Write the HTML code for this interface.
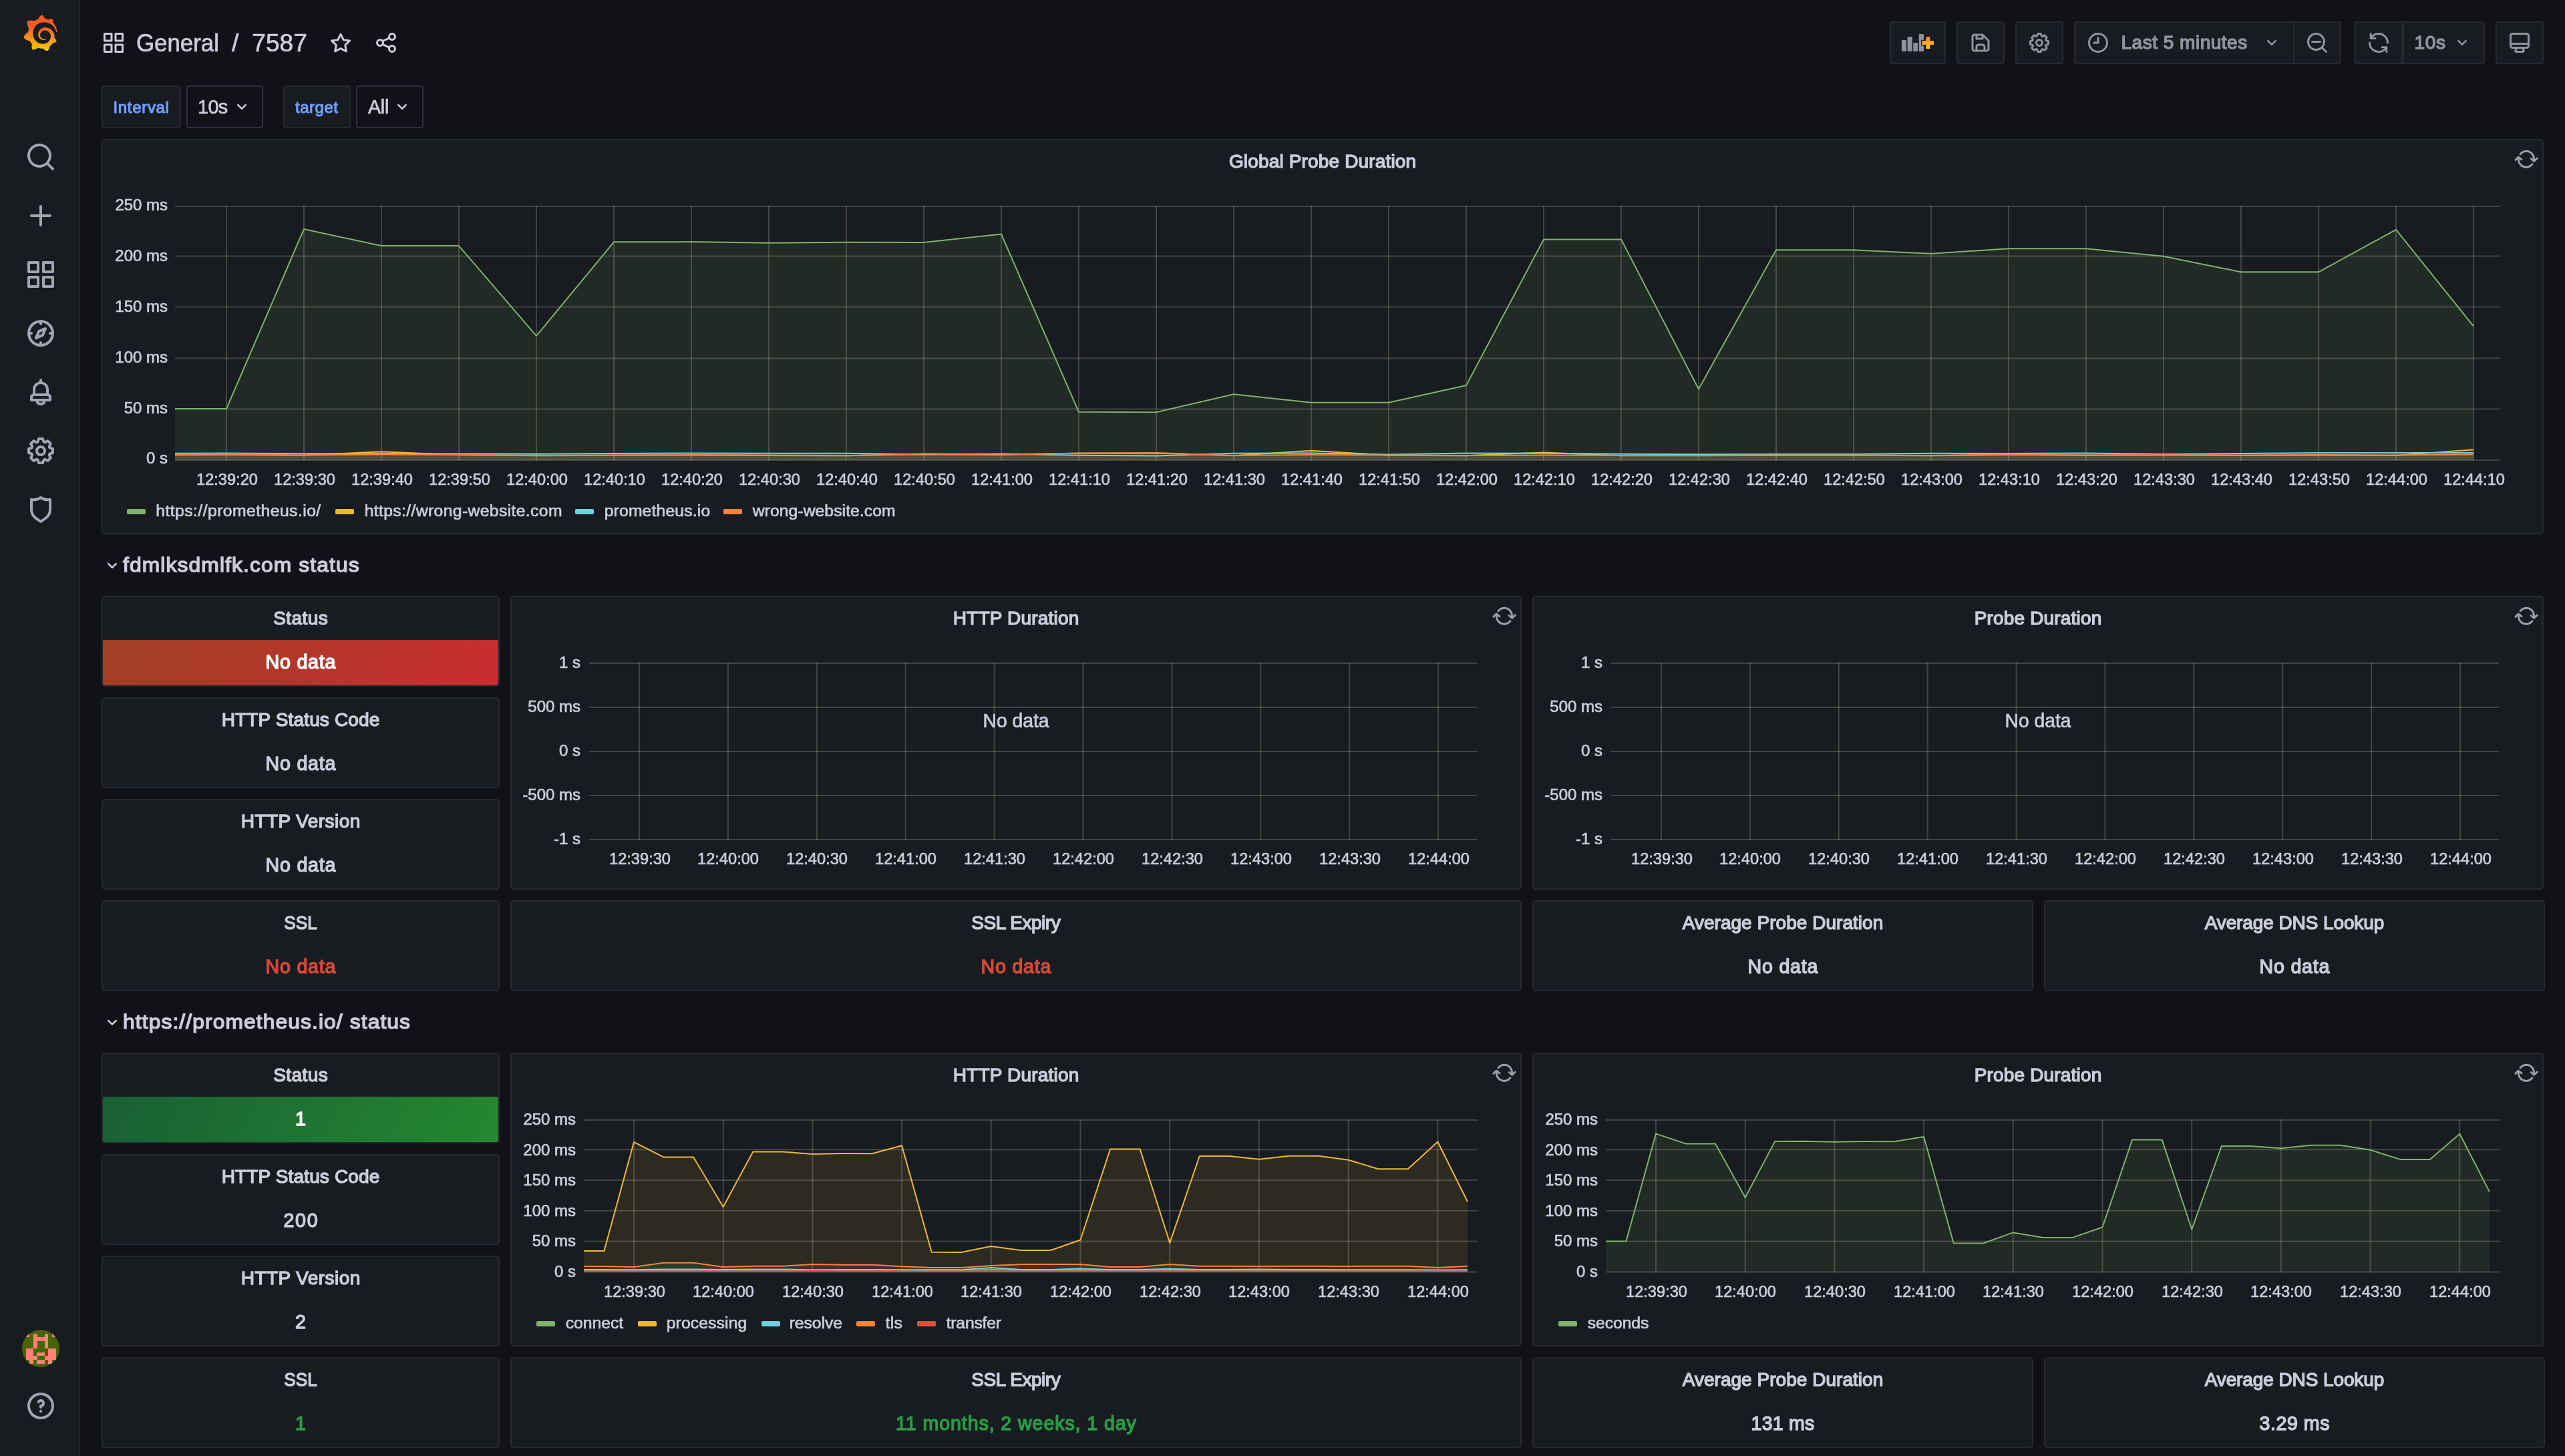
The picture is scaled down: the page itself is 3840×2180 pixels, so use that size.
<!DOCTYPE html>
<html lang="en"><head><meta charset="utf-8"><title>7587 - Grafana</title>
<style>
*{margin:0;padding:0;box-sizing:border-box}
html,body{width:3840px;height:2180px;overflow:hidden;background:#111217}
body{position:relative;font-family:"Liberation Sans",sans-serif;color:#ccccdc}
.t{position:absolute;white-space:nowrap}
.t span{display:inline-block;-webkit-text-stroke:0.7px currentColor}
.m span{-webkit-text-stroke:1.4px currentColor}
.m2 span{-webkit-text-stroke:1.1px currentColor}
.b{position:absolute}
.i{position:absolute;display:block}
svg.c{position:absolute;left:0;top:0;display:block}
#tx{position:absolute;left:0;top:0;width:3840px;height:2180px;will-change:transform}
</style></head>
<body>
<div class="b" style="left:0;top:0;width:120px;height:2180px;background:#181b1f;border-right:2px solid #27292f"></div>
<svg class="i" style="left:33.7px;top:21.6px" width="52.5" height="54.6" viewBox="0 0 351 365"><defs><linearGradient id="lg" gradientUnits="userSpaceOnUse" x1="175.5" y1="445" x2="175.5" y2="114"><stop offset="0" stop-color="#FFF100"/><stop offset="1" stop-color="#F05A28"/></linearGradient></defs><path fill="url(#lg)" d="M342,161.2c-0.6-6.1-1.6-13.1-3.6-20.9c-2-7.7-5-16.2-9.4-25c-4.4-8.8-10.1-17.9-17.5-26.8c-2.9-3.5-6.1-6.9-9.5-10.2c5.1-20.3-6.2-37.9-6.2-37.9c-19.5-1.2-31.9,6.1-36.5,9.4c-0.8-0.3-1.5-0.7-2.3-1c-3.3-1.3-6.7-2.6-10.3-3.7c-3.5-1.1-7.1-2.1-10.8-3c-3.7-0.9-7.4-1.6-11.2-2.2c-0.7-0.1-1.3-0.2-2-0.3c-8.5-27.2-32.9-38.6-32.9-38.6c-27.3,17.3-32.4,41.5-32.4,41.5s-0.1,0.5-0.3,1.4c-1.5,0.4-3,0.9-4.5,1.3c-2.1,0.6-4.2,1.4-6.2,2.2c-2.1,0.8-4.1,1.6-6.2,2.5c-4.1,1.8-8.2,3.8-12.2,6c-3.9,2.2-7.7,4.6-11.4,7.1c-0.5-0.2-1-0.4-1-0.4c-37.8-14.4-71.3,2.9-71.3,2.9c-3.1,40.2,15.1,65.5,18.7,70.1c-0.9,2.5-1.7,5-2.5,7.5c-2.8,9.1-4.9,18.4-6.2,28.1c-0.2,1.4-0.4,2.8-0.5,4.2C18.8,192.7,8.5,228,8.5,228c29.1,33.5,63.1,35.6,63.1,35.6c0,0,0.1-0.1,0.1-0.1c4.3,7.7,9.3,15,14.9,21.9c2.4,2.9,4.8,5.6,7.4,8.3c-10.6,30.4,1.5,55.6,1.5,55.6c32.4,1.2,53.7-14.2,58.2-17.7c3.2,1.1,6.5,2.1,9.8,2.9c10,2.6,20.2,4.1,30.4,4.5c2.5,0.1,5.1,0.2,7.6,0.1l1.2,0l0.8,0l1.6,0l1.6-0.1l0,0.1c15.3,21.8,42.1,24.9,42.1,24.9c19.1-20.1,20.2-40.1,20.2-44.4l0,0c0,0,0-0.1,0-0.3c0-0.4,0-0.6,0-0.6l0,0c0-0.3,0-0.6,0-0.9c4-2.8,7.8-5.8,11.4-9.1c7.6-6.9,14.3-14.8,19.9-23.3c0.5-0.8,1-1.6,1.5-2.4c21.6,1.2,36.9-13.4,36.9-13.4c-3.6-22.5-16.4-33.5-19.1-35.6l0,0c0,0-0.1-0.1-0.3-0.2c-0.2-0.1-0.2-0.2-0.2-0.2c0,0,0,0,0,0c-0.1-0.1-0.3-0.2-0.5-0.3c0.1-1.4,0.2-2.7,0.3-4.1c0.2-2.4,0.2-4.9,0.2-7.3l0-1.8l0-0.9l0-0.5c0-0.6,0-0.4,0-0.6l-0.1-1.5l-0.1-2c0-0.7-0.1-1.3-0.2-1.9c-0.1-0.6-0.1-1.3-0.2-1.9l-0.2-1.9l-0.3-1.9c-0.4-2.5-0.8-4.9-1.4-7.4c-2.3-9.7-6.1-18.9-11-27.2c-5-8.3-11.2-15.6-18.3-21.8c-7-6.2-14.9-11.2-23.1-14.9c-8.3-3.7-16.9-6.1-25.5-7.2c-4.3-0.6-8.6-0.8-12.9-0.7l-1.6,0l-0.4,0c-0.1,0-0.6,0-0.5,0l-0.7,0l-1.6,0.1c-0.6,0-1.2,0.1-1.7,0.1c-2.2,0.2-4.4,0.5-6.5,0.9c-8.6,1.6-16.7,4.7-23.8,9c-7.1,4.3-13.3,9.6-18.3,15.6c-5,6-8.9,12.7-11.6,19.6c-2.7,6.9-4.2,14.1-4.6,21c-0.1,1.7-0.1,3.5-0.1,5.2c0,0.4,0,0.9,0,1.3l0.1,1.4c0.1,0.8,0.1,1.7,0.2,2.5c0.3,3.5,1,6.9,1.9,10.1c1.9,6.5,4.9,12.4,8.6,17.4c3.7,5,8.2,9.1,12.9,12.4c4.7,3.2,9.8,5.5,14.8,7c5,1.5,10,2.1,14.7,2.1c0.6,0,1.2,0,1.7,0c0.3,0,0.6,0,0.9,0c0.3,0,0.6,0,0.9-0.1c0.5,0,1-0.1,1.5-0.1c0.1,0,0.3,0,0.4-0.1l0.5-0.1c0.3,0,0.6-0.1,0.9-0.1c0.6-0.1,1.1-0.2,1.7-0.3c0.6-0.1,1.1-0.2,1.6-0.4c1.1-0.2,2.1-0.6,3.1-0.9c2-0.7,4-1.5,5.7-2.4c1.8-0.9,3.4-2,5-3c0.4-0.3,0.9-0.6,1.3-1c1.6-1.3,1.9-3.7,0.6-5.3c-1.1-1.4-3.1-1.8-4.7-0.9c-0.4,0.2-0.8,0.4-1.2,0.6c-1.4,0.7-2.8,1.3-4.3,1.8c-1.5,0.5-3.1,0.9-4.7,1.2c-0.8,0.1-1.6,0.2-2.5,0.3c-0.4,0-0.8,0.1-1.3,0.1c-0.4,0-0.9,0-1.2,0c-0.4,0-0.8,0-1.2,0c-0.5,0-1,0-1.5-0.1c0,0-0.3,0-0.1,0l-0.2,0l-0.3,0c-0.2,0-0.5,0-0.7-0.1c-0.5-0.1-0.9-0.1-1.4-0.2c-3.7-0.5-7.4-1.6-10.9-3.2c-3.6-1.6-7-3.8-10.1-6.6c-3.1-2.8-5.8-6.1-7.9-9.9c-2.1-3.8-3.6-8-4.3-12.4c-0.3-2.2-0.5-4.5-0.4-6.7c0-0.6,0.1-1.2,0.1-1.8c0,0.2,0-0.1,0-0.1l0-0.2l0-0.5c0-0.3,0.1-0.6,0.1-0.9c0.1-1.2,0.3-2.4,0.5-3.6c1.7-9.6,6.5-19,13.9-26.1c1.9-1.8,3.9-3.4,6-4.9c2.1-1.5,4.4-2.8,6.8-3.9c2.4-1.1,4.8-2,7.4-2.7c2.5-0.7,5.1-1.1,7.8-1.4c1.3-0.1,2.6-0.2,4-0.2c0.4,0,0.6,0,0.9,0l1.1,0l0.7,0c0.3,0,0,0,0.1,0l0.3,0l1.1,0.1c2.9,0.2,5.7,0.6,8.5,1.3c5.6,1.2,11.1,3.3,16.2,6.1c10.2,5.7,18.9,14.5,24.2,25.1c2.7,5.3,4.6,11,5.5,16.9c0.2,1.5,0.4,3,0.5,4.5l0.1,1.1l0.1,1.1c0,0.4,0,0.8,0,1.1c0,0.4,0,0.8,0,1.1l0,1l0,1.1c0,0.7-0.1,1.9-0.1,2.6c-0.1,1.6-0.3,3.3-0.5,4.9c-0.2,1.6-0.5,3.2-0.8,4.8c-0.3,1.6-0.7,3.2-1.1,4.7c-0.8,3.1-1.8,6.2-3,9.3c-2.4,6-5.6,11.8-9.4,17.1c-7.7,10.6-18.2,19.2-30.2,24.7c-6,2.7-12.3,4.7-18.8,5.7c-3.2,0.6-6.5,0.9-9.8,1l-0.6,0l-0.5,0l-1.1,0l-1.6,0l-0.8,0c0.4,0-0.1,0-0.1,0l-0.3,0c-1.8,0-3.5-0.1-5.3-0.3c-7-0.5-13.9-1.8-20.7-3.7c-6.7-1.9-13.2-4.6-19.4-7.8c-12.3-6.6-23.4-15.6-32-26.5c-4.3-5.4-8.1-11.3-11.2-17.4c-3.1-6.1-5.6-12.6-7.4-19.1c-1.8-6.6-2.9-13.3-3.4-20.1l-0.1-1.3l0-0.3l0-0.3l0-0.6l0-1.1l0-0.3l0-0.4l0-0.8l0-1.6l0-0.3c0,0,0,0.1,0-0.1l0-0.6c0-0.8,0-1.7,0-2.5c0.1-3.3,0.4-6.8,0.8-10.2c0.4-3.4,1-6.9,1.7-10.3c0.7-3.4,1.5-6.8,2.5-10.2c1.9-6.7,4.3-13.2,7.1-19.3c5.7-12.2,13.1-23.1,22-31.8c2.2-2.2,4.5-4.2,6.9-6.2c2.4-1.9,4.9-3.7,7.5-5.4c2.5-1.7,5.2-3.2,7.9-4.6c1.3-0.7,2.7-1.4,4.1-2c0.7-0.3,1.4-0.6,2.1-0.9c0.7-0.3,1.4-0.6,2.1-0.9c2.8-1.2,5.7-2.2,8.7-3.1c0.7-0.2,1.5-0.4,2.2-0.7c0.7-0.2,1.5-0.4,2.2-0.6c1.5-0.4,3-0.8,4.5-1.1c0.7-0.2,1.5-0.3,2.3-0.5c0.8-0.2,1.5-0.3,2.3-0.5c0.8-0.1,1.5-0.3,2.3-0.4l1.1-0.2l1.2-0.2c0.8-0.1,1.5-0.2,2.3-0.3c0.9-0.1,1.7-0.2,2.6-0.3c0.7-0.1,1.9-0.2,2.6-0.3c0.5-0.1,1.1-0.1,1.6-0.2l1.1-0.1l0.5-0.1l0.6,0c0.9-0.1,1.7-0.1,2.6-0.2l1.3-0.1c0,0,0.5,0,0.1,0l0.3,0l0.6,0c0.7,0,1.5-0.1,2.2-0.1c2.9-0.1,5.9-0.1,8.8,0c5.8,0.2,11.5,0.9,17,1.9c11.1,2.1,21.5,5.6,31,10.3c9.5,4.6,17.9,10.3,25.3,16.5c0.5,0.4,0.9,0.8,1.4,1.2c0.4,0.4,0.9,0.8,1.3,1.2c0.9,0.8,1.7,1.6,2.6,2.4c0.9,0.8,1.7,1.6,2.5,2.4c0.8,0.8,1.6,1.6,2.4,2.5c3.1,3.3,6,6.6,8.6,10c5.2,6.7,9.4,13.5,12.7,19.9c0.2,0.4,0.4,0.8,0.6,1.2c0.2,0.4,0.4,0.8,0.6,1.2c0.4,0.8,0.8,1.6,1.1,2.4c0.4,0.8,0.7,1.5,1.1,2.3c0.3,0.8,0.7,1.5,1,2.3c1.2,3,2.4,5.9,3.3,8.6c1.5,4.4,2.6,8.3,3.5,11.7c0.3,1.4,1.6,2.3,3,2.1c1.5-0.1,2.6-1.3,2.6-2.8C342.6,170.4,342.5,166.1,342,161.2z"/></svg>
<svg class="i" style="left:37px;top:211px" width="48" height="48" viewBox="0 0 24 24"><path fill="#9fa7b3" d="M21.71,20.29,18,16.61A9,9,0,1,0,16.61,18l3.68,3.68a1,1,0,0,0,1.42,0A1,1,0,0,0,21.71,20.29ZM11,18a7,7,0,1,1,7-7A7,7,0,0,1,11,18Z"/></svg>
<svg class="i" style="left:37px;top:299px" width="48" height="48" viewBox="0 0 24 24"><path fill="#9fa7b3" d="M19,11H13V5a1,1,0,0,0-2,0v6H5a1,1,0,0,0,0,2h6v6a1,1,0,0,0,2,0V13h6a1,1,0,0,0,0-2Z"/></svg>
<svg class="i" style="left:37px;top:387px" width="48" height="48" viewBox="0 0 24 24"><path fill="#9fa7b3" d="M10,13H3a1,1,0,0,0-1,1v7a1,1,0,0,0,1,1h7a1,1,0,0,0,1-1V14A1,1,0,0,0,10,13ZM9,20H4V15H9ZM21,2H14a1,1,0,0,0-1,1v7a1,1,0,0,0,1,1h7a1,1,0,0,0,1-1V3A1,1,0,0,0,21,2ZM20,9H15V4h5Zm1,4H14a1,1,0,0,0-1,1v7a1,1,0,0,0,1,1h7a1,1,0,0,0,1-1V14A1,1,0,0,0,21,13Zm-1,7H15V15h5ZM10,2H3A1,1,0,0,0,2,3v7a1,1,0,0,0,1,1h7a1,1,0,0,0,1-1V3A1,1,0,0,0,10,2ZM9,9H4V4H9Z"/></svg>
<svg class="i" style="left:37px;top:475px" width="48" height="48" viewBox="0 0 24 24"><path fill="#9fa7b3" d="M12,2A10,10,0,1,0,22,12,10,10,0,0,0,12,2Zm1,17.93V19a1,1,0,0,0-2,0v.93A8,8,0,0,1,4.07,13H5a1,1,0,0,0,0-2H4.07A8,8,0,0,1,11,4.07V5a1,1,0,0,0,2,0V4.07A8,8,0,0,1,19.93,11H19a1,1,0,0,0,0,2h.93A8,8,0,0,1,13,19.93ZM15.14,7.55l-5,2.12a1,1,0,0,0-.52.52l-2.12,5a1,1,0,0,0,.21,1.1,1,1,0,0,0,.7.3.93.93,0,0,0,.4-.09l5-2.12a1,1,0,0,0,.52-.52l2.12-5a1,1,0,0,0-1.31-1.31Zm-2.49,5.1-2.28,1,1-2.28,2.28-1Z"/></svg>
<svg class="i" style="left:37px;top:563px" width="48" height="48" viewBox="0 0 24 24"><path fill="#9fa7b3" d="M18,13.18V10a6,6,0,0,0-5-5.91V3a1,1,0,0,0-2,0V4.09A6,6,0,0,0,6,10v3.18A3,3,0,0,0,4,16v2a1,1,0,0,0,1,1H8.14a4,4,0,0,0,7.72,0H19a1,1,0,0,0,1-1V16A3,3,0,0,0,18,13.18ZM8,10a4,4,0,0,1,8,0v3H8Zm4,10a2,2,0,0,1-1.72-1h3.44A2,2,0,0,1,12,20Zm6-3H6V16a1,1,0,0,1,1-1H17a1,1,0,0,1,1,1Z"/></svg>
<svg class="i" style="left:37px;top:651px" width="48" height="48" viewBox="0 0 24 24"><path fill="#9fa7b3" d="M21.32,9.55l-1.89-.63.89-1.78A1,1,0,0,0,20.13,6L18,3.87a1,1,0,0,0-1.15-.19l-1.78.89-.63-1.89A1,1,0,0,0,13.5,2h-3a1,1,0,0,0-.95.68L8.92,4.57,7.14,3.68A1,1,0,0,0,6,3.87L3.87,6a1,1,0,0,0-.19,1.15l.89,1.78-1.89.63A1,1,0,0,0,2,10.5v3a1,1,0,0,0,.68.95l1.89.63-.89,1.78A1,1,0,0,0,3.87,18L6,20.13a1,1,0,0,0,1.15.19l1.78-.89.63,1.89a1,1,0,0,0,.95.68h3a1,1,0,0,0,.95-.68l.63-1.89,1.78.89A1,1,0,0,0,18,20.13L20.13,18a1,1,0,0,0,.19-1.15l-.89-1.78,1.89-.63A1,1,0,0,0,22,13.5v-3A1,1,0,0,0,21.32,9.55ZM20,12.78l-1.2.4A2,2,0,0,0,17.64,16l.57,1.14-1.1,1.1L16,17.64a2,2,0,0,0-2.79,1.16l-.4,1.2H11.22l-.4-1.2A2,2,0,0,0,8,17.64l-1.14.57-1.1-1.1L6.36,16A2,2,0,0,0,5.2,13.18L4,12.78V11.22l1.2-.4A2,2,0,0,0,6.36,8L5.79,6.89l1.1-1.1L8,6.36A2,2,0,0,0,10.82,5.2l.4-1.2h1.56l.4,1.2A2,2,0,0,0,16,6.36l1.14-.57,1.1,1.1L17.64,8a2,2,0,0,0,1.16,2.79l1.2.4ZM12,8a4,4,0,1,0,4,4A4,4,0,0,0,12,8Zm0,6a2,2,0,1,1,2-2A2,2,0,0,1,12,14Z"/></svg>
<svg class="i" style="left:37px;top:739px" width="48" height="48" viewBox="0 0 24 24"><path fill="#9fa7b3" d="M19.63,3.65a1,1,0,0,0-.84-.2,8,8,0,0,1-6.22-1.27,1,1,0,0,0-1.14,0A8,8,0,0,1,5.21,3.45a1,1,0,0,0-.84.2A1,1,0,0,0,4,4.43v7.45a9,9,0,0,0,3.77,7.33l3.65,2.6a1,1,0,0,0,1.16,0l3.65-2.6A9,9,0,0,0,20,11.88V4.43A1,1,0,0,0,19.63,3.65ZM18,11.88a7,7,0,0,1-2.93,5.7L12,19.77,8.93,17.58A7,7,0,0,1,6,11.88V5.58a10,10,0,0,0,6-1.39,10,10,0,0,0,6,1.39Z"/></svg>
<svg class="i" style="left:37px;top:2081px" width="48" height="48" viewBox="0 0 24 24"><path fill="#9fa7b3" d="M11.29,15.29a1.58,1.58,0,0,0-.12.15.76.76,0,0,0-.09.18.64.64,0,0,0-.06.18,1.36,1.36,0,0,0,0,.2.84.84,0,0,0,.08.38.9.9,0,0,0,.54.54.94.94,0,0,0,.76,0,.9.9,0,0,0,.54-.54A1,1,0,0,0,13,16a1,1,0,0,0-.29-.71A1,1,0,0,0,11.29,15.29ZM12,2A10,10,0,1,0,22,12,10,10,0,0,0,12,2Zm0,18a8,8,0,1,1,8-8A8,8,0,0,1,12,20ZM12,7A3,3,0,0,0,9.4,8.5a1,1,0,1,0,1.73,1A1,1,0,0,1,12,9a1,1,0,0,1,0,2,1,1,0,0,0-1,1v1a1,1,0,0,0,2,0v-.18A3,3,0,0,0,12,7Z"/></svg>
<svg class="i" style="left:33px;top:1991px" width="56" height="56" viewBox="0 0 10 10" shape-rendering="crispEdges"><defs><clipPath id="av"><circle cx="5" cy="5" r="5"/></clipPath></defs><g clip-path="url(#av)"><rect width="10" height="10" fill="#486409"/><rect x="1" y="1" width="1.02" height="1.02" fill="#fe8076"/><rect x="3" y="1" width="1.02" height="1.02" fill="#fe8076"/><rect x="6" y="1" width="1.02" height="1.02" fill="#fe8076"/><rect x="8" y="1" width="1.02" height="1.02" fill="#fe8076"/><rect x="3" y="2" width="1.02" height="1.02" fill="#fe8076"/><rect x="4" y="2" width="1.02" height="1.02" fill="#fe8076"/><rect x="5" y="2" width="1.02" height="1.02" fill="#fe8076"/><rect x="6" y="2" width="1.02" height="1.02" fill="#fe8076"/><rect x="3" y="3" width="1.02" height="1.02" fill="#fe8076"/><rect x="6" y="3" width="1.02" height="1.02" fill="#fe8076"/><rect x="3" y="4" width="1.02" height="1.02" fill="#fe8076"/><rect x="6" y="4" width="1.02" height="1.02" fill="#fe8076"/><rect x="1" y="5" width="1.02" height="1.02" fill="#fe8076"/><rect x="2" y="5" width="1.02" height="1.02" fill="#fe8076"/><rect x="7" y="5" width="1.02" height="1.02" fill="#fe8076"/><rect x="8" y="5" width="1.02" height="1.02" fill="#fe8076"/><rect x="1" y="6" width="1.02" height="1.02" fill="#fe8076"/><rect x="2" y="6" width="1.02" height="1.02" fill="#fe8076"/><rect x="4" y="6" width="1.02" height="1.02" fill="#fe8076"/><rect x="5" y="6" width="1.02" height="1.02" fill="#fe8076"/><rect x="7" y="6" width="1.02" height="1.02" fill="#fe8076"/><rect x="8" y="6" width="1.02" height="1.02" fill="#fe8076"/><rect x="1" y="7" width="1.02" height="1.02" fill="#fe8076"/><rect x="2" y="7" width="1.02" height="1.02" fill="#fe8076"/><rect x="3" y="7" width="1.02" height="1.02" fill="#fe8076"/><rect x="6" y="7" width="1.02" height="1.02" fill="#fe8076"/><rect x="7" y="7" width="1.02" height="1.02" fill="#fe8076"/><rect x="8" y="7" width="1.02" height="1.02" fill="#fe8076"/><rect x="2" y="8" width="1.02" height="1.02" fill="#fe8076"/><rect x="4" y="8" width="1.02" height="1.02" fill="#fe8076"/><rect x="5" y="8" width="1.02" height="1.02" fill="#fe8076"/><rect x="7" y="8" width="1.02" height="1.02" fill="#fe8076"/></g></svg>
<svg class="i" style="left:152px;top:46px" width="36" height="36" viewBox="0 0 24 24"><path fill="#ccccdc" d="M10,13H3a1,1,0,0,0-1,1v7a1,1,0,0,0,1,1h7a1,1,0,0,0,1-1V14A1,1,0,0,0,10,13ZM9,20H4V15H9ZM21,2H14a1,1,0,0,0-1,1v7a1,1,0,0,0,1,1h7a1,1,0,0,0,1-1V3A1,1,0,0,0,21,2ZM20,9H15V4h5Zm1,4H14a1,1,0,0,0-1,1v7a1,1,0,0,0,1,1h7a1,1,0,0,0,1-1V14A1,1,0,0,0,21,13Zm-1,7H15V15h5ZM10,2H3A1,1,0,0,0,2,3v7a1,1,0,0,0,1,1h7a1,1,0,0,0,1-1V3A1,1,0,0,0,10,2ZM9,9H4V4H9Z"/></svg>
<svg class="i" style="left:492px;top:46px" width="36" height="36" viewBox="0 0 24 24"><path fill="#ccccdc" d="M22,9.67A1,1,0,0,0,21.14,9l-5.69-.83L12.9,3a1,1,0,0,0-1.8,0L8.55,8.16,2.86,9a1,1,0,0,0-.81.68,1,1,0,0,0,.25,1l4.13,4-1,5.68A1,1,0,0,0,6.9,21.44L12,18.77l5.1,2.67a.93.93,0,0,0,.46.12,1,1,0,0,0,.59-.19,1,1,0,0,0,.4-1l-1-5.68,4.13-4A1,1,0,0,0,22,9.67Zm-6.15,4a1,1,0,0,0-.29.88l.72,4.2-3.76-2a1.06,1.06,0,0,0-.94,0l-3.76,2,.72-4.2a1,1,0,0,0-.29-.88l-3-3,4.21-.61a1,1,0,0,0,.76-.55L12,5.7l1.88,3.82a1,1,0,0,0,.76.55l4.21.61Z"/></svg>
<svg class="i" style="left:560px;top:46px" width="36" height="36" viewBox="0 0 24 24"><path fill="#ccccdc" d="M18,14a4,4,0,0,0-3.08,1.48l-5.1-2.35a3.64,3.64,0,0,0,0-2.26l5.1-2.35A4,4,0,1,0,14,6a4.17,4.17,0,0,0,.07.71L8.79,9.14a4,4,0,1,0,0,5.72l5.28,2.43A4.17,4.17,0,0,0,14,18a4,4,0,1,0,4-4ZM18,4a2,2,0,1,1-2,2A2,2,0,0,1,18,4ZM6,14a2,2,0,1,1,2-2A2,2,0,0,1,6,14Zm12,6a2,2,0,1,1,2-2A2,2,0,0,1,18,20Z"/></svg>
<div class="b" style="left:2829px;top:32px;width:84px;height:64px;background:#181b1f;border:2px solid #27292f;border-radius:4px;"></div>
<div class="b" style="left:2929px;top:32px;width:72px;height:64px;background:#181b1f;border:2px solid #27292f;border-radius:4px;"></div>
<div class="b" style="left:3017px;top:32px;width:72px;height:64px;background:#181b1f;border:2px solid #27292f;border-radius:4px;"></div>
<div class="b" style="left:3105px;top:32px;width:400px;height:64px;background:#181b1f;border:2px solid #27292f;border-radius:4px;"></div>
<div class="b" style="left:3433px;top:34px;width:2px;height:60px;background:#27292f"></div>
<div class="b" style="left:3525px;top:32px;width:72px;height:64px;background:#181b1f;border:2px solid #27292f;border-radius:4px;border-top-right-radius:0;border-bottom-right-radius:0;"></div>
<div class="b" style="left:3597px;top:32px;width:123px;height:64px;background:#181b1f;border:2px solid #27292f;border-radius:4px;"></div>
<div class="b" style="left:3736px;top:32px;width:72px;height:64px;background:#181b1f;border:2px solid #27292f;border-radius:4px;"></div>
<svg class="i" style="left:2840px;top:44px" width="64" height="40" viewBox="0 0 64 40"><defs><linearGradient id="pg" x1="0" y1="0" x2="0" y2="1"><stop offset="0" stop-color="#f5823c"/><stop offset="1" stop-color="#ffc814"/></linearGradient></defs><rect x="6.9" y="16.1" width="7.1" height="17" rx="1" fill="#8f8f9d"/><rect x="15.6" y="10.9" width="7.2" height="22.2" rx="1" fill="#8f8f9d"/><rect x="24.2" y="19.9" width="6.9" height="13.2" rx="1" fill="#8f8f9d"/><rect x="32.8" y="7" width="7.2" height="26.1" rx="1" fill="#8f8f9d"/><path d="M43.4 11.1h6v5.9h5.7v6.1h-5.7v5.9h-6v-5.9h-6v-6.1h6z" fill="url(#pg)" stroke="#181b1f" stroke-width="2.6" stroke-linejoin="round" paint-order="stroke"/></svg>
<svg class="i" style="left:2947px;top:46px" width="36" height="36" viewBox="0 0 24 24"><path fill="#9293a0" d="M20.71,9.29l-6-6a1,1,0,0,0-.32-.21A1.09,1.09,0,0,0,14,3H6A3,3,0,0,0,3,6V18a3,3,0,0,0,3,3H18a3,3,0,0,0,3-3V10A1,1,0,0,0,20.71,9.29ZM9,5h4V7H9Zm6,14H9V16a1,1,0,0,1,1-1h4a1,1,0,0,1,1,1Zm4-1a1,1,0,0,1-1,1H17V16a3,3,0,0,0-3-3H10a3,3,0,0,0-3,3v3H6a1,1,0,0,1-1-1V6A1,1,0,0,1,6,5H7V8A1,1,0,0,0,8,9h6a1,1,0,0,0,1-1V6.41l4,4Z"/></svg>
<svg class="i" style="left:3035px;top:46px" width="36" height="36" viewBox="0 0 24 24"><path fill="#9293a0" d="M21.32,9.55l-1.89-.63.89-1.78A1,1,0,0,0,20.13,6L18,3.87a1,1,0,0,0-1.15-.19l-1.78.89-.63-1.89A1,1,0,0,0,13.5,2h-3a1,1,0,0,0-.95.68L8.92,4.57,7.14,3.68A1,1,0,0,0,6,3.87L3.87,6a1,1,0,0,0-.19,1.15l.89,1.78-1.89.63A1,1,0,0,0,2,10.5v3a1,1,0,0,0,.68.95l1.89.63-.89,1.78A1,1,0,0,0,3.87,18L6,20.13a1,1,0,0,0,1.15.19l1.78-.89.63,1.89a1,1,0,0,0,.95.68h3a1,1,0,0,0,.95-.68l.63-1.89,1.78.89A1,1,0,0,0,18,20.13L20.13,18a1,1,0,0,0,.19-1.15l-.89-1.78,1.89-.63A1,1,0,0,0,22,13.5v-3A1,1,0,0,0,21.32,9.55ZM20,12.78l-1.2.4A2,2,0,0,0,17.64,16l.57,1.14-1.1,1.1L16,17.64a2,2,0,0,0-2.79,1.16l-.4,1.2H11.22l-.4-1.2A2,2,0,0,0,8,17.64l-1.14.57-1.1-1.1L6.36,16A2,2,0,0,0,5.2,13.18L4,12.78V11.22l1.2-.4A2,2,0,0,0,6.36,8L5.79,6.89l1.1-1.1L8,6.36A2,2,0,0,0,10.82,5.2l.4-1.2h1.56l.4,1.2A2,2,0,0,0,16,6.36l1.14-.57,1.1,1.1L17.64,8a2,2,0,0,0,1.16,2.79l1.2.4ZM12,8a4,4,0,1,0,4,4A4,4,0,0,0,12,8Zm0,6a2,2,0,1,1,2-2A2,2,0,0,1,12,14Z"/></svg>
<svg class="i" style="left:3123px;top:46px" width="36" height="36" viewBox="0 0 24 24"><path fill="#9293a0" d="M12,2A10,10,0,1,0,22,12,10,10,0,0,0,12,2Zm0,18a8,8,0,1,1,8-8A8,8,0,0,1,12,20ZM12,6a1,1,0,0,0-1,1v4H8a1,1,0,0,0,0,2h4a1,1,0,0,0,1-1V7A1,1,0,0,0,12,6Z"/></svg>
<svg class="i" style="left:3385px;top:48px" width="32" height="32" viewBox="0 0 24 24"><path fill="#9293a0" d="M17,9.17a1,1,0,0,0-1.41,0L12,12.71,8.46,9.17a1,1,0,0,0-1.41,0,1,1,0,0,0,0,1.42l4.24,4.24a1,1,0,0,0,1.42,0L17,10.59A1,1,0,0,0,17,9.17Z"/></svg>
<svg class="i" style="left:3451px;top:46px" width="36" height="36" viewBox="0 0 24 24"><path fill="#9293a0" d="M21.71,20.29,18,16.61A9,9,0,1,0,16.61,18l3.68,3.68a1,1,0,0,0,1.42,0A1,1,0,0,0,21.71,20.29ZM11,18a7,7,0,1,1,7-7A7,7,0,0,1,11,18Zm4-8H7a1,1,0,0,0,0,2h8a1,1,0,0,0,0-2Z"/></svg>
<svg class="i" style="left:3543px;top:46px" width="36" height="36" viewBox="0 0 24 24"><path fill="#9293a0" d="M19.91,15.51H15.38a1,1,0,0,0,0,2h2.4A8,8,0,0,1,4,12a1,1,0,0,0-2,0,10,10,0,0,0,16.88,7.23V21a1,1,0,0,0,2,0V16.5A1,1,0,0,0,19.91,15.51ZM12,2A10,10,0,0,0,5.12,4.77V3a1,1,0,0,0-2,0V7.5a1,1,0,0,0,1,1h4.5a1,1,0,0,0,0-2H6.22A8,8,0,0,1,20,12a1,1,0,0,0,2,0A10,10,0,0,0,12,2Z"/></svg>
<svg class="i" style="left:3670px;top:48px" width="32" height="32" viewBox="0 0 24 24"><path fill="#9293a0" d="M17,9.17a1,1,0,0,0-1.41,0L12,12.71,8.46,9.17a1,1,0,0,0-1.41,0,1,1,0,0,0,0,1.42l4.24,4.24a1,1,0,0,0,1.42,0L17,10.59A1,1,0,0,0,17,9.17Z"/></svg>
<svg class="i" style="left:3754px;top:46px" width="36" height="36" viewBox="0 0 24 24"><path fill="#9293a0" d="M19,2H5A3,3,0,0,0,2,5V15a3,3,0,0,0,3,3H7.64l-.58,1a2,2,0,0,0,0,2,2,2,0,0,0,1.75,1h6.46A2,2,0,0,0,17,21a2,2,0,0,0,0-2l-.59-1H19a3,3,0,0,0,3-3V5A3,3,0,0,0,19,2ZM8.77,20,10,18H14l1.2,2ZM20,15a1,1,0,0,1-1,1H5a1,1,0,0,1-1-1V14H20Zm0-3H4V5A1,1,0,0,1,5,4H19a1,1,0,0,1,1,1Z"/></svg>
<div class="b" style="left:152px;top:128px;width:119px;height:64px;background:#181b1f;border:2px solid #27292f;border-radius:4px;"></div>
<div class="b" style="left:279px;top:128px;width:115px;height:64px;background:#111217;border:2px solid #2e3037;border-radius:4px;"></div>
<svg class="i" style="left:346px;top:144px" width="32" height="32" viewBox="0 0 24 24"><path fill="#ccccdc" d="M17,9.17a1,1,0,0,0-1.41,0L12,12.71,8.46,9.17a1,1,0,0,0-1.41,0,1,1,0,0,0,0,1.42l4.24,4.24a1,1,0,0,0,1.42,0L17,10.59A1,1,0,0,0,17,9.17Z"/></svg>
<div class="b" style="left:424px;top:128px;width:101px;height:64px;background:#181b1f;border:2px solid #27292f;border-radius:4px;"></div>
<div class="b" style="left:533px;top:128px;width:101px;height:64px;background:#111217;border:2px solid #2e3037;border-radius:4px;"></div>
<svg class="i" style="left:586px;top:144px" width="32" height="32" viewBox="0 0 24 24"><path fill="#ccccdc" d="M17,9.17a1,1,0,0,0-1.41,0L12,12.71,8.46,9.17a1,1,0,0,0-1.41,0,1,1,0,0,0,0,1.42l4.24,4.24a1,1,0,0,0,1.42,0L17,10.59A1,1,0,0,0,17,9.17Z"/></svg>
<div class="b" style="left:152px;top:208px;width:3656px;height:592px;background:#181b1f;border:2px solid #27292f;border-radius:5px;"></div>
<svg class="i" style="left:3760px;top:216px" width="44" height="44" viewBox="-22 -22 44 44" fill="none" stroke="#9d9eab" stroke-width="3" stroke-linecap="round" stroke-linejoin="round"><path d="M-9,-7.2A11.5,11.5,0,0,1,11.5,1.2"/><path d="M9,7.9A11.5,11.5,0,0,1,-11.5,-0.8"/><path d="M7.2,-0.5L11.6,3.4L16.3,-0.8"/><path d="M-16.1,1.3L-11.8,-2.8L-6.9,0.9"/></svg>
<svg class="c" width="3840" height="2180" viewBox="0 0 3840 2180"><defs><clipPath id="cp39"><rect x="262" y="307" width="3480" height="383"/></clipPath></defs><rect x="338.0" y="308" width="2" height="382" fill="rgba(255,243,220,0.19)"/><rect x="454.0" y="308" width="2" height="382" fill="rgba(255,243,220,0.19)"/><rect x="570.0" y="308" width="2" height="382" fill="rgba(255,243,220,0.19)"/><rect x="686.0" y="308" width="2" height="382" fill="rgba(255,243,220,0.19)"/><rect x="802.0" y="308" width="2" height="382" fill="rgba(255,243,220,0.19)"/><rect x="918.0" y="308" width="2" height="382" fill="rgba(255,243,220,0.19)"/><rect x="1034.0" y="308" width="2" height="382" fill="rgba(255,243,220,0.19)"/><rect x="1150.0" y="308" width="2" height="382" fill="rgba(255,243,220,0.19)"/><rect x="1266.0" y="308" width="2" height="382" fill="rgba(255,243,220,0.19)"/><rect x="1382.0" y="308" width="2" height="382" fill="rgba(255,243,220,0.19)"/><rect x="1498.0" y="308" width="2" height="382" fill="rgba(255,243,220,0.19)"/><rect x="1614.0" y="308" width="2" height="382" fill="rgba(255,243,220,0.19)"/><rect x="1730.0" y="308" width="2" height="382" fill="rgba(255,243,220,0.19)"/><rect x="1846.0" y="308" width="2" height="382" fill="rgba(255,243,220,0.19)"/><rect x="1962.0" y="308" width="2" height="382" fill="rgba(255,243,220,0.19)"/><rect x="2078.0" y="308" width="2" height="382" fill="rgba(255,243,220,0.19)"/><rect x="2194.0" y="308" width="2" height="382" fill="rgba(255,243,220,0.19)"/><rect x="2310.0" y="308" width="2" height="382" fill="rgba(255,243,220,0.19)"/><rect x="2426.0" y="308" width="2" height="382" fill="rgba(255,243,220,0.19)"/><rect x="2542.0" y="308" width="2" height="382" fill="rgba(255,243,220,0.19)"/><rect x="2658.0" y="308" width="2" height="382" fill="rgba(255,243,220,0.19)"/><rect x="2774.0" y="308" width="2" height="382" fill="rgba(255,243,220,0.19)"/><rect x="2890.0" y="308" width="2" height="382" fill="rgba(255,243,220,0.19)"/><rect x="3006.0" y="308" width="2" height="382" fill="rgba(255,243,220,0.19)"/><rect x="3122.0" y="308" width="2" height="382" fill="rgba(255,243,220,0.19)"/><rect x="3238.0" y="308" width="2" height="382" fill="rgba(255,243,220,0.19)"/><rect x="3354.0" y="308" width="2" height="382" fill="rgba(255,243,220,0.19)"/><rect x="3470.0" y="308" width="2" height="382" fill="rgba(255,243,220,0.19)"/><rect x="3586.0" y="308" width="2" height="382" fill="rgba(255,243,220,0.19)"/><rect x="3702.0" y="308" width="2" height="382" fill="rgba(255,243,220,0.19)"/><rect x="262" y="308.0" width="3480" height="2" fill="rgba(255,243,220,0.19)"/><rect x="262" y="382.5" width="3480" height="2" fill="rgba(255,243,220,0.19)"/><rect x="262" y="458.5" width="3480" height="2" fill="rgba(255,243,220,0.19)"/><rect x="262" y="535.5" width="3480" height="2" fill="rgba(255,243,220,0.19)"/><rect x="262" y="611.5" width="3480" height="2" fill="rgba(255,243,220,0.19)"/><rect x="262" y="688.0" width="3480" height="2" fill="rgba(255,243,220,0.19)"/><g clip-path="url(#cp39)"><polygon points="223.0,612.0 339.0,612.0 455.0,343.0 571.0,368.1 687.0,368.1 803.0,502.8 919.0,362.3 1035.0,362.1 1151.0,363.8 1267.0,362.7 1383.0,363.0 1499.0,350.6 1615.0,616.8 1731.0,617.2 1847.0,590.3 1963.0,602.8 2079.0,602.8 2195.0,577.1 2311.0,358.4 2427.0,358.4 2543.0,582.5 2659.0,374.3 2775.0,374.3 2891.0,379.7 3007.0,372.2 3123.0,372.2 3239.0,383.8 3355.0,407.3 3471.0,407.3 3587.0,343.8 3703.0,488.4 3703.0,689 223.0,689" fill="#7eb26d" fill-opacity="0.1"/><polygon points="223.0,681.2 339.0,681.1 455.0,681.7 571.0,676.2 687.0,681.2 803.0,682.2 919.0,681.7 1035.0,681.4 1151.0,681.9 1267.0,682.3 1383.0,679.4 1499.0,680.2 1615.0,678.7 1731.0,678.4 1847.0,682.2 1963.0,674.7 2079.0,681.7 2195.0,682.3 2311.0,677.4 2427.0,682.2 2543.0,682.2 2659.0,681.7 2775.0,681.7 2891.0,682.3 3007.0,680.9 3123.0,681.7 3239.0,681.4 3355.0,681.9 3471.0,681.4 3587.0,681.9 3703.0,673.3 3703.0,689 223.0,689" fill="#eab839" fill-opacity="0.1"/><polygon points="223.0,679.0 339.0,678.5 455.0,679.3 571.0,679.0 687.0,679.4 803.0,679.7 919.0,679.1 1035.0,678.4 1151.0,678.8 1267.0,678.7 1383.0,680.5 1499.0,679.4 1615.0,681.7 1731.0,682.6 1847.0,678.7 1963.0,678.4 2079.0,680.5 2195.0,678.4 2311.0,678.8 2427.0,679.7 2543.0,680.2 2659.0,679.9 2775.0,679.9 2891.0,678.7 3007.0,679.1 3123.0,678.4 3239.0,679.9 3355.0,679.1 3471.0,678.1 3587.0,678.1 3703.0,678.1 3703.0,689 223.0,689" fill="#6ed0e0" fill-opacity="0.1"/><polygon points="223.0,680.9 339.0,680.8 455.0,681.4 571.0,680.6 687.0,680.9 803.0,681.9 919.0,681.4 1035.0,681.1 1151.0,681.6 1267.0,682.0 1383.0,680.6 1499.0,681.2 1615.0,678.4 1731.0,678.1 1847.0,681.9 1963.0,680.9 2079.0,681.4 2195.0,682.0 2311.0,681.6 2427.0,681.9 2543.0,681.9 2659.0,681.4 2775.0,681.4 2891.0,682.0 3007.0,680.6 3123.0,681.4 3239.0,681.1 3355.0,681.6 3471.0,681.1 3587.0,681.6 3703.0,680.6 3703.0,689 223.0,689" fill="#ef843c" fill-opacity="0.1"/><polyline points="223.0,612.0 339.0,612.0 455.0,343.0 571.0,368.1 687.0,368.1 803.0,502.8 919.0,362.3 1035.0,362.1 1151.0,363.8 1267.0,362.7 1383.0,363.0 1499.0,350.6 1615.0,616.8 1731.0,617.2 1847.0,590.3 1963.0,602.8 2079.0,602.8 2195.0,577.1 2311.0,358.4 2427.0,358.4 2543.0,582.5 2659.0,374.3 2775.0,374.3 2891.0,379.7 3007.0,372.2 3123.0,372.2 3239.0,383.8 3355.0,407.3 3471.0,407.3 3587.0,343.8 3703.0,488.4" fill="none" stroke="#7eb26d" stroke-width="2" stroke-linejoin="round"/><polyline points="223.0,681.2 339.0,681.1 455.0,681.7 571.0,676.2 687.0,681.2 803.0,682.2 919.0,681.7 1035.0,681.4 1151.0,681.9 1267.0,682.3 1383.0,679.4 1499.0,680.2 1615.0,678.7 1731.0,678.4 1847.0,682.2 1963.0,674.7 2079.0,681.7 2195.0,682.3 2311.0,677.4 2427.0,682.2 2543.0,682.2 2659.0,681.7 2775.0,681.7 2891.0,682.3 3007.0,680.9 3123.0,681.7 3239.0,681.4 3355.0,681.9 3471.0,681.4 3587.0,681.9 3703.0,673.3" fill="none" stroke="#eab839" stroke-width="2" stroke-linejoin="round"/><polyline points="223.0,679.0 339.0,678.5 455.0,679.3 571.0,679.0 687.0,679.4 803.0,679.7 919.0,679.1 1035.0,678.4 1151.0,678.8 1267.0,678.7 1383.0,680.5 1499.0,679.4 1615.0,681.7 1731.0,682.6 1847.0,678.7 1963.0,678.4 2079.0,680.5 2195.0,678.4 2311.0,678.8 2427.0,679.7 2543.0,680.2 2659.0,679.9 2775.0,679.9 2891.0,678.7 3007.0,679.1 3123.0,678.4 3239.0,679.9 3355.0,679.1 3471.0,678.1 3587.0,678.1 3703.0,678.1" fill="none" stroke="#6ed0e0" stroke-width="2" stroke-linejoin="round"/><polyline points="223.0,680.9 339.0,680.8 455.0,681.4 571.0,680.6 687.0,680.9 803.0,681.9 919.0,681.4 1035.0,681.1 1151.0,681.6 1267.0,682.0 1383.0,680.6 1499.0,681.2 1615.0,678.4 1731.0,678.1 1847.0,681.9 1963.0,680.9 2079.0,681.4 2195.0,682.0 2311.0,681.6 2427.0,681.9 2543.0,681.9 2659.0,681.4 2775.0,681.4 2891.0,682.0 3007.0,680.6 3123.0,681.4 3239.0,681.1 3355.0,681.6 3471.0,681.1 3587.0,681.6 3703.0,680.6" fill="none" stroke="#ef843c" stroke-width="2" stroke-linejoin="round"/></g></svg>
<div class="b" style="left:189.5px;top:761.5px;width:28px;height:8px;border-radius:2px;background:#7eb26d"></div>
<div class="b" style="left:501.5px;top:761.5px;width:28px;height:8px;border-radius:2px;background:#eab839"></div>
<div class="b" style="left:860.5px;top:761.5px;width:28px;height:8px;border-radius:2px;background:#6ed0e0"></div>
<div class="b" style="left:1082.5px;top:761.5px;width:28px;height:8px;border-radius:2px;background:#ef843c"></div>
<svg class="i" style="left:152px;top:831px" width="32" height="32" viewBox="0 0 24 24"><path fill="#ccccdc" d="M17,9.17a1,1,0,0,0-1.41,0L12,12.71,8.46,9.17a1,1,0,0,0-1.41,0,1,1,0,0,0,0,1.42l4.24,4.24a1,1,0,0,0,1.42,0L17,10.59A1,1,0,0,0,17,9.17Z"/></svg>
<div class="b" style="left:152px;top:892px;width:596px;height:136px;background:#181b1f;border:2px solid #27292f;border-radius:5px;"></div>
<div class="b" style="left:154px;top:958px;width:592px;height:68px;background:linear-gradient(120deg,rgb(159,64,35),rgb(201,44,48));border-radius:3px 3px 4px 4px"></div>
<div class="b" style="left:152px;top:1044px;width:596px;height:136px;background:#181b1f;border:2px solid #27292f;border-radius:5px;"></div>
<div class="b" style="left:152px;top:1196px;width:596px;height:136px;background:#181b1f;border:2px solid #27292f;border-radius:5px;"></div>
<div class="b" style="left:152px;top:1348px;width:596px;height:136px;background:#181b1f;border:2px solid #27292f;border-radius:5px;"></div>
<div class="b" style="left:764px;top:1348px;width:1514px;height:136px;background:#181b1f;border:2px solid #27292f;border-radius:5px;"></div>
<div class="b" style="left:2294px;top:1348px;width:750px;height:136px;background:#181b1f;border:2px solid #27292f;border-radius:5px;"></div>
<div class="b" style="left:3060px;top:1348px;width:750px;height:136px;background:#181b1f;border:2px solid #27292f;border-radius:5px;"></div>
<div class="b" style="left:764px;top:892px;width:1514px;height:440px;background:#181b1f;border:2px solid #27292f;border-radius:5px;"></div>
<svg class="i" style="left:2230px;top:900px" width="44" height="44" viewBox="-22 -22 44 44" fill="none" stroke="#9d9eab" stroke-width="3" stroke-linecap="round" stroke-linejoin="round"><path d="M-9,-7.2A11.5,11.5,0,0,1,11.5,1.2"/><path d="M9,7.9A11.5,11.5,0,0,1,-11.5,-0.8"/><path d="M7.2,-0.5L11.6,3.4L16.3,-0.8"/><path d="M-16.1,1.3L-11.8,-2.8L-6.9,0.9"/></svg>
<svg class="c" width="3840" height="2180" viewBox="0 0 3840 2180"><defs><clipPath id="cp55"><rect x="882" y="991" width="1329" height="267"/></clipPath></defs><rect x="956.0" y="992" width="2" height="266" fill="rgba(255,243,220,0.19)"/><rect x="1088.9" y="992" width="2" height="266" fill="rgba(255,243,220,0.19)"/><rect x="1221.8" y="992" width="2" height="266" fill="rgba(255,243,220,0.19)"/><rect x="1354.7" y="992" width="2" height="266" fill="rgba(255,243,220,0.19)"/><rect x="1487.6" y="992" width="2" height="266" fill="rgba(255,243,220,0.19)"/><rect x="1620.5" y="992" width="2" height="266" fill="rgba(255,243,220,0.19)"/><rect x="1753.4" y="992" width="2" height="266" fill="rgba(255,243,220,0.19)"/><rect x="1886.3" y="992" width="2" height="266" fill="rgba(255,243,220,0.19)"/><rect x="2019.2" y="992" width="2" height="266" fill="rgba(255,243,220,0.19)"/><rect x="2152.1" y="992" width="2" height="266" fill="rgba(255,243,220,0.19)"/><rect x="882" y="992.0" width="1329" height="2" fill="rgba(255,243,220,0.19)"/><rect x="882" y="1058.0" width="1329" height="2" fill="rgba(255,243,220,0.19)"/><rect x="882" y="1124.0" width="1329" height="2" fill="rgba(255,243,220,0.19)"/><rect x="882" y="1190.0" width="1329" height="2" fill="rgba(255,243,220,0.19)"/><rect x="882" y="1256.0" width="1329" height="2" fill="rgba(255,243,220,0.19)"/><g clip-path="url(#cp55)"></g></svg>
<div class="b" style="left:2294px;top:892px;width:1514px;height:440px;background:#181b1f;border:2px solid #27292f;border-radius:5px;"></div>
<svg class="i" style="left:3760px;top:900px" width="44" height="44" viewBox="-22 -22 44 44" fill="none" stroke="#9d9eab" stroke-width="3" stroke-linecap="round" stroke-linejoin="round"><path d="M-9,-7.2A11.5,11.5,0,0,1,11.5,1.2"/><path d="M9,7.9A11.5,11.5,0,0,1,-11.5,-0.8"/><path d="M7.2,-0.5L11.6,3.4L16.3,-0.8"/><path d="M-16.1,1.3L-11.8,-2.8L-6.9,0.9"/></svg>
<svg class="c" width="3840" height="2180" viewBox="0 0 3840 2180"><defs><clipPath id="cp58"><rect x="2412" y="991" width="1329" height="267"/></clipPath></defs><rect x="2486.0" y="992" width="2" height="266" fill="rgba(255,243,220,0.19)"/><rect x="2618.9" y="992" width="2" height="266" fill="rgba(255,243,220,0.19)"/><rect x="2751.8" y="992" width="2" height="266" fill="rgba(255,243,220,0.19)"/><rect x="2884.7" y="992" width="2" height="266" fill="rgba(255,243,220,0.19)"/><rect x="3017.6" y="992" width="2" height="266" fill="rgba(255,243,220,0.19)"/><rect x="3150.5" y="992" width="2" height="266" fill="rgba(255,243,220,0.19)"/><rect x="3283.4" y="992" width="2" height="266" fill="rgba(255,243,220,0.19)"/><rect x="3416.3" y="992" width="2" height="266" fill="rgba(255,243,220,0.19)"/><rect x="3549.2" y="992" width="2" height="266" fill="rgba(255,243,220,0.19)"/><rect x="3682.1" y="992" width="2" height="266" fill="rgba(255,243,220,0.19)"/><rect x="2412" y="992.0" width="1329" height="2" fill="rgba(255,243,220,0.19)"/><rect x="2412" y="1058.0" width="1329" height="2" fill="rgba(255,243,220,0.19)"/><rect x="2412" y="1124.0" width="1329" height="2" fill="rgba(255,243,220,0.19)"/><rect x="2412" y="1190.0" width="1329" height="2" fill="rgba(255,243,220,0.19)"/><rect x="2412" y="1256.0" width="1329" height="2" fill="rgba(255,243,220,0.19)"/><g clip-path="url(#cp58)"></g></svg>
<svg class="i" style="left:152px;top:1515px" width="32" height="32" viewBox="0 0 24 24"><path fill="#ccccdc" d="M17,9.17a1,1,0,0,0-1.41,0L12,12.71,8.46,9.17a1,1,0,0,0-1.41,0,1,1,0,0,0,0,1.42l4.24,4.24a1,1,0,0,0,1.42,0L17,10.59A1,1,0,0,0,17,9.17Z"/></svg>
<div class="b" style="left:152px;top:1576px;width:596px;height:136px;background:#181b1f;border:2px solid #27292f;border-radius:5px;"></div>
<div class="b" style="left:154px;top:1642px;width:592px;height:68px;background:linear-gradient(120deg,rgb(25,95,52),rgb(36,136,48));border-radius:3px 3px 4px 4px"></div>
<div class="b" style="left:152px;top:1728px;width:596px;height:136px;background:#181b1f;border:2px solid #27292f;border-radius:5px;"></div>
<div class="b" style="left:152px;top:1880px;width:596px;height:136px;background:#181b1f;border:2px solid #27292f;border-radius:5px;"></div>
<div class="b" style="left:152px;top:2032px;width:596px;height:136px;background:#181b1f;border:2px solid #27292f;border-radius:5px;"></div>
<div class="b" style="left:764px;top:2032px;width:1514px;height:136px;background:#181b1f;border:2px solid #27292f;border-radius:5px;"></div>
<div class="b" style="left:2294px;top:2032px;width:750px;height:136px;background:#181b1f;border:2px solid #27292f;border-radius:5px;"></div>
<div class="b" style="left:3060px;top:2032px;width:750px;height:136px;background:#181b1f;border:2px solid #27292f;border-radius:5px;"></div>
<div class="b" style="left:764px;top:1576px;width:1514px;height:440px;background:#181b1f;border:2px solid #27292f;border-radius:5px;"></div>
<svg class="i" style="left:2230px;top:1584px" width="44" height="44" viewBox="-22 -22 44 44" fill="none" stroke="#9d9eab" stroke-width="3" stroke-linecap="round" stroke-linejoin="round"><path d="M-9,-7.2A11.5,11.5,0,0,1,11.5,1.2"/><path d="M9,7.9A11.5,11.5,0,0,1,-11.5,-0.8"/><path d="M7.2,-0.5L11.6,3.4L16.3,-0.8"/><path d="M-16.1,1.3L-11.8,-2.8L-6.9,0.9"/></svg>
<svg class="c" width="3840" height="2180" viewBox="0 0 3840 2180"><defs><clipPath id="cp70"><rect x="874" y="1675" width="1338" height="230.5"/></clipPath></defs><rect x="948.0" y="1676" width="2" height="229.5" fill="rgba(255,243,220,0.19)"/><rect x="1081.7" y="1676" width="2" height="229.5" fill="rgba(255,243,220,0.19)"/><rect x="1215.4" y="1676" width="2" height="229.5" fill="rgba(255,243,220,0.19)"/><rect x="1349.1" y="1676" width="2" height="229.5" fill="rgba(255,243,220,0.19)"/><rect x="1482.8" y="1676" width="2" height="229.5" fill="rgba(255,243,220,0.19)"/><rect x="1616.5" y="1676" width="2" height="229.5" fill="rgba(255,243,220,0.19)"/><rect x="1750.2" y="1676" width="2" height="229.5" fill="rgba(255,243,220,0.19)"/><rect x="1883.9" y="1676" width="2" height="229.5" fill="rgba(255,243,220,0.19)"/><rect x="2017.6" y="1676" width="2" height="229.5" fill="rgba(255,243,220,0.19)"/><rect x="2151.3" y="1676" width="2" height="229.5" fill="rgba(255,243,220,0.19)"/><rect x="874" y="1676.0" width="1338" height="2" fill="rgba(255,243,220,0.19)"/><rect x="874" y="1720.2" width="1338" height="2" fill="rgba(255,243,220,0.19)"/><rect x="874" y="1766.0" width="1338" height="2" fill="rgba(255,243,220,0.19)"/><rect x="874" y="1811.8" width="1338" height="2" fill="rgba(255,243,220,0.19)"/><rect x="874" y="1857.6" width="1338" height="2" fill="rgba(255,243,220,0.19)"/><rect x="874" y="1903.5" width="1338" height="2" fill="rgba(255,243,220,0.19)"/><g clip-path="url(#cp70)"><polygon points="859.9,1902.0 904.4,1902.0 949.0,1902.1 993.6,1901.7 1038.1,1901.7 1082.7,1902.0 1127.3,1901.8 1171.8,1901.8 1216.4,1902.0 1261.0,1902.0 1305.6,1902.0 1350.1,1902.1 1394.7,1902.1 1439.3,1902.1 1483.8,1900.7 1528.4,1902.0 1573.0,1902.0 1617.5,1901.5 1662.1,1902.0 1706.7,1902.0 1751.3,1901.6 1795.8,1902.0 1840.4,1902.0 1885.0,1901.8 1929.5,1902.0 1974.1,1902.0 2018.7,1902.0 2063.2,1902.0 2107.8,1902.0 2152.4,1902.1 2197.0,1902.0 2197.0,1904.5 859.9,1904.5" fill="#7eb26d" fill-opacity="0.1"/><polygon points="859.9,1872.9 904.4,1872.9 949.0,1709.9 993.6,1732.6 1038.1,1732.6 1082.7,1806.9 1127.3,1724.4 1171.8,1724.4 1216.4,1727.9 1261.0,1726.9 1305.6,1727.2 1350.1,1715.2 1394.7,1874.8 1439.3,1875.1 1483.8,1866.0 1528.4,1872.0 1573.0,1872.0 1617.5,1856.5 1662.1,1720.6 1706.7,1720.6 1751.3,1860.9 1795.8,1731.0 1840.4,1731.0 1885.0,1735.8 1929.5,1730.7 1974.1,1730.7 2018.7,1736.7 2063.2,1750.3 2107.8,1750.3 2152.4,1709.5 2197.0,1799.3 2197.0,1904.5 859.9,1904.5" fill="#eab839" fill-opacity="0.1"/><polygon points="859.9,1901.0 904.4,1901.0 949.0,1901.3 993.6,1900.4 1038.1,1900.4 1082.7,1901.0 1127.3,1900.4 1171.8,1900.4 1216.4,1901.3 1261.0,1901.0 1305.6,1901.0 1350.1,1901.3 1394.7,1901.3 1439.3,1901.3 1483.8,1897.9 1528.4,1901.0 1573.0,1901.0 1617.5,1899.5 1662.1,1901.0 1706.7,1901.0 1751.3,1899.8 1795.8,1901.0 1840.4,1901.0 1885.0,1900.4 1929.5,1901.0 1974.1,1901.0 2018.7,1901.3 2063.2,1901.3 2107.8,1901.3 2152.4,1901.6 2197.0,1901.3 2197.0,1904.5 859.9,1904.5" fill="#6ed0e0" fill-opacity="0.1"/><polygon points="859.9,1895.9 904.4,1895.9 949.0,1896.9 993.6,1890.8 1038.1,1890.8 1082.7,1896.9 1127.3,1895.7 1171.8,1895.7 1216.4,1893.1 1261.0,1893.8 1305.6,1893.8 1350.1,1896.3 1394.7,1897.9 1439.3,1897.9 1483.8,1895.0 1528.4,1893.1 1573.0,1893.1 1617.5,1893.1 1662.1,1896.9 1706.7,1896.9 1751.3,1893.1 1795.8,1895.7 1840.4,1895.7 1885.0,1895.9 1929.5,1895.7 1974.1,1895.7 2018.7,1895.9 2063.2,1895.7 2107.8,1895.7 2152.4,1897.9 2197.0,1895.7 2197.0,1904.5 859.9,1904.5" fill="#ef843c" fill-opacity="0.1"/><polygon points="859.9,1903.2 904.4,1903.2 949.0,1903.4 993.6,1903.2 1038.1,1903.2 1082.7,1903.3 1127.3,1903.2 1171.8,1903.2 1216.4,1902.5 1261.0,1903.0 1305.6,1903.0 1350.1,1903.2 1394.7,1903.4 1439.3,1903.4 1483.8,1903.2 1528.4,1903.2 1573.0,1903.2 1617.5,1903.2 1662.1,1903.3 1706.7,1903.3 1751.3,1903.2 1795.8,1903.2 1840.4,1903.2 1885.0,1903.1 1929.5,1903.2 1974.1,1903.2 2018.7,1903.2 2063.2,1903.3 2107.8,1903.3 2152.4,1903.3 2197.0,1903.2 2197.0,1904.5 859.9,1904.5" fill="#e24d42" fill-opacity="0.1"/><polyline points="859.9,1902.0 904.4,1902.0 949.0,1902.1 993.6,1901.7 1038.1,1901.7 1082.7,1902.0 1127.3,1901.8 1171.8,1901.8 1216.4,1902.0 1261.0,1902.0 1305.6,1902.0 1350.1,1902.1 1394.7,1902.1 1439.3,1902.1 1483.8,1900.7 1528.4,1902.0 1573.0,1902.0 1617.5,1901.5 1662.1,1902.0 1706.7,1902.0 1751.3,1901.6 1795.8,1902.0 1840.4,1902.0 1885.0,1901.8 1929.5,1902.0 1974.1,1902.0 2018.7,1902.0 2063.2,1902.0 2107.8,1902.0 2152.4,1902.1 2197.0,1902.0" fill="none" stroke="#7eb26d" stroke-width="2" stroke-linejoin="round"/><polyline points="859.9,1872.9 904.4,1872.9 949.0,1709.9 993.6,1732.6 1038.1,1732.6 1082.7,1806.9 1127.3,1724.4 1171.8,1724.4 1216.4,1727.9 1261.0,1726.9 1305.6,1727.2 1350.1,1715.2 1394.7,1874.8 1439.3,1875.1 1483.8,1866.0 1528.4,1872.0 1573.0,1872.0 1617.5,1856.5 1662.1,1720.6 1706.7,1720.6 1751.3,1860.9 1795.8,1731.0 1840.4,1731.0 1885.0,1735.8 1929.5,1730.7 1974.1,1730.7 2018.7,1736.7 2063.2,1750.3 2107.8,1750.3 2152.4,1709.5 2197.0,1799.3" fill="none" stroke="#eab839" stroke-width="2" stroke-linejoin="round"/><polyline points="859.9,1901.0 904.4,1901.0 949.0,1901.3 993.6,1900.4 1038.1,1900.4 1082.7,1901.0 1127.3,1900.4 1171.8,1900.4 1216.4,1901.3 1261.0,1901.0 1305.6,1901.0 1350.1,1901.3 1394.7,1901.3 1439.3,1901.3 1483.8,1897.9 1528.4,1901.0 1573.0,1901.0 1617.5,1899.5 1662.1,1901.0 1706.7,1901.0 1751.3,1899.8 1795.8,1901.0 1840.4,1901.0 1885.0,1900.4 1929.5,1901.0 1974.1,1901.0 2018.7,1901.3 2063.2,1901.3 2107.8,1901.3 2152.4,1901.6 2197.0,1901.3" fill="none" stroke="#6ed0e0" stroke-width="2" stroke-linejoin="round"/><polyline points="859.9,1895.9 904.4,1895.9 949.0,1896.9 993.6,1890.8 1038.1,1890.8 1082.7,1896.9 1127.3,1895.7 1171.8,1895.7 1216.4,1893.1 1261.0,1893.8 1305.6,1893.8 1350.1,1896.3 1394.7,1897.9 1439.3,1897.9 1483.8,1895.0 1528.4,1893.1 1573.0,1893.1 1617.5,1893.1 1662.1,1896.9 1706.7,1896.9 1751.3,1893.1 1795.8,1895.7 1840.4,1895.7 1885.0,1895.9 1929.5,1895.7 1974.1,1895.7 2018.7,1895.9 2063.2,1895.7 2107.8,1895.7 2152.4,1897.9 2197.0,1895.7" fill="none" stroke="#ef843c" stroke-width="2" stroke-linejoin="round"/><polyline points="859.9,1903.2 904.4,1903.2 949.0,1903.4 993.6,1903.2 1038.1,1903.2 1082.7,1903.3 1127.3,1903.2 1171.8,1903.2 1216.4,1902.5 1261.0,1903.0 1305.6,1903.0 1350.1,1903.2 1394.7,1903.4 1439.3,1903.4 1483.8,1903.2 1528.4,1903.2 1573.0,1903.2 1617.5,1903.2 1662.1,1903.3 1706.7,1903.3 1751.3,1903.2 1795.8,1903.2 1840.4,1903.2 1885.0,1903.1 1929.5,1903.2 1974.1,1903.2 2018.7,1903.2 2063.2,1903.3 2107.8,1903.3 2152.4,1903.3 2197.0,1903.2" fill="none" stroke="#e24d42" stroke-width="2" stroke-linejoin="round"/></g></svg>
<div class="b" style="left:802.5px;top:1978px;width:28px;height:8px;border-radius:2px;background:#7eb26d"></div>
<div class="b" style="left:954.5px;top:1978px;width:28px;height:8px;border-radius:2px;background:#eab839"></div>
<div class="b" style="left:1139.5px;top:1978px;width:28px;height:8px;border-radius:2px;background:#6ed0e0"></div>
<div class="b" style="left:1281.5px;top:1978px;width:28px;height:8px;border-radius:2px;background:#ef843c"></div>
<div class="b" style="left:1372.5px;top:1978px;width:28px;height:8px;border-radius:2px;background:#e24d42"></div>
<div class="b" style="left:2294px;top:1576px;width:1514px;height:440px;background:#181b1f;border:2px solid #27292f;border-radius:5px;"></div>
<svg class="i" style="left:3760px;top:1584px" width="44" height="44" viewBox="-22 -22 44 44" fill="none" stroke="#9d9eab" stroke-width="3" stroke-linecap="round" stroke-linejoin="round"><path d="M-9,-7.2A11.5,11.5,0,0,1,11.5,1.2"/><path d="M9,7.9A11.5,11.5,0,0,1,-11.5,-0.8"/><path d="M7.2,-0.5L11.6,3.4L16.3,-0.8"/><path d="M-16.1,1.3L-11.8,-2.8L-6.9,0.9"/></svg>
<svg class="c" width="3840" height="2180" viewBox="0 0 3840 2180"><defs><clipPath id="cp78"><rect x="2404" y="1675" width="1338" height="230.5"/></clipPath></defs><rect x="2478.0" y="1676" width="2" height="229.5" fill="rgba(255,243,220,0.19)"/><rect x="2611.7" y="1676" width="2" height="229.5" fill="rgba(255,243,220,0.19)"/><rect x="2745.4" y="1676" width="2" height="229.5" fill="rgba(255,243,220,0.19)"/><rect x="2879.1" y="1676" width="2" height="229.5" fill="rgba(255,243,220,0.19)"/><rect x="3012.8" y="1676" width="2" height="229.5" fill="rgba(255,243,220,0.19)"/><rect x="3146.5" y="1676" width="2" height="229.5" fill="rgba(255,243,220,0.19)"/><rect x="3280.2" y="1676" width="2" height="229.5" fill="rgba(255,243,220,0.19)"/><rect x="3413.9" y="1676" width="2" height="229.5" fill="rgba(255,243,220,0.19)"/><rect x="3547.6" y="1676" width="2" height="229.5" fill="rgba(255,243,220,0.19)"/><rect x="3681.3" y="1676" width="2" height="229.5" fill="rgba(255,243,220,0.19)"/><rect x="2404" y="1676.0" width="1338" height="2" fill="rgba(255,243,220,0.19)"/><rect x="2404" y="1720.2" width="1338" height="2" fill="rgba(255,243,220,0.19)"/><rect x="2404" y="1766.0" width="1338" height="2" fill="rgba(255,243,220,0.19)"/><rect x="2404" y="1811.8" width="1338" height="2" fill="rgba(255,243,220,0.19)"/><rect x="2404" y="1857.6" width="1338" height="2" fill="rgba(255,243,220,0.19)"/><rect x="2404" y="1903.5" width="1338" height="2" fill="rgba(255,243,220,0.19)"/><g clip-path="url(#cp78)"><polygon points="2389.9,1858.4 2434.4,1858.4 2479.0,1697.4 2523.6,1712.4 2568.1,1712.4 2612.7,1793.0 2657.3,1708.9 2701.8,1708.8 2746.4,1709.8 2791.0,1709.1 2835.6,1709.3 2880.1,1701.9 2924.7,1861.3 2969.3,1861.5 3013.8,1845.4 3058.4,1852.9 3103.0,1852.9 3147.5,1837.5 3192.1,1706.6 3236.7,1706.6 3281.3,1840.7 3325.8,1716.1 3370.4,1716.1 3415.0,1719.3 3459.5,1714.8 3504.1,1714.8 3548.7,1721.8 3593.2,1735.9 3637.8,1735.9 3682.4,1697.8 3727.0,1784.4 3727.0,1904.5 2389.9,1904.5" fill="#7eb26d" fill-opacity="0.1"/><polyline points="2389.9,1858.4 2434.4,1858.4 2479.0,1697.4 2523.6,1712.4 2568.1,1712.4 2612.7,1793.0 2657.3,1708.9 2701.8,1708.8 2746.4,1709.8 2791.0,1709.1 2835.6,1709.3 2880.1,1701.9 2924.7,1861.3 2969.3,1861.5 3013.8,1845.4 3058.4,1852.9 3103.0,1852.9 3147.5,1837.5 3192.1,1706.6 3236.7,1706.6 3281.3,1840.7 3325.8,1716.1 3370.4,1716.1 3415.0,1719.3 3459.5,1714.8 3504.1,1714.8 3548.7,1721.8 3593.2,1735.9 3637.8,1735.9 3682.4,1697.8 3727.0,1784.4" fill="none" stroke="#7eb26d" stroke-width="2" stroke-linejoin="round"/></g></svg>
<div class="b" style="left:2332.5px;top:1978px;width:28px;height:8px;border-radius:2px;background:#7eb26d"></div>
<div id="tx">
<div class="t " style="left:204.3px;top:37.0px;font-size:37.08px;line-height:54px;color:#ccccdc;"><span id="t0" style="transform:scaleX(0.9392);transform-origin:0 50%;">General</span></div>
<div class="t " style="left:347.0px;top:37.0px;font-size:37.08px;line-height:54px;color:#ccccdc;"><span id="t1" style="">/</span></div>
<div class="t " style="left:377.3px;top:37.0px;font-size:37.08px;line-height:54px;color:#ccccdc;"><span id="t2" style="letter-spacing:0.037px;margin-right:-0.037px;">7587</span></div>
<div class="t m" style="left:3175.5px;top:43.0px;font-size:28px;line-height:42px;color:#9293a0;"><span id="t3" style="letter-spacing:0.507px;margin-right:-0.507px;">Last 5 minutes</span></div>
<div class="t m" style="left:3614.4px;top:43.0px;font-size:28px;line-height:42px;color:#9293a0;"><span id="t4" style="letter-spacing:0.781px;margin-right:-0.781px;">10s</span></div>
<div class="t m2" style="left:169.5px;top:142.5px;font-size:24px;line-height:36px;color:#6e9fff;"><span id="t5" style="letter-spacing:0.676px;margin-right:-0.676px;">Interval</span></div>
<div class="t " style="left:296.0px;top:139.0px;font-size:28.84px;line-height:42px;color:#ccccdc;"><span id="t6" style="letter-spacing:-0.645px;margin-right:0.645px;">10s</span></div>
<div class="t m2" style="left:442.0px;top:142.5px;font-size:24px;line-height:36px;color:#6e9fff;"><span id="t7" style="letter-spacing:0.518px;margin-right:-0.518px;">target</span></div>
<div class="t " style="left:551.0px;top:139.0px;font-size:28.84px;line-height:42px;color:#ccccdc;"><span id="t8" style="letter-spacing:-0.366px;margin-right:0.366px;">All</span></div>
<div class="t m" style="left:1980.0px;top:221.0px;font-size:28px;line-height:42px;color:#ccccdc;transform:translateX(-50%);"><span id="t9" style="letter-spacing:0.158px;margin-right:-0.158px;">Global Probe Duration</span></div>
<div class="t " style="left:251.0px;top:289.4px;font-size:24.72px;line-height:36px;color:#ccccdc;transform:translateX(-100%);"><span id="t10" style="transform:scaleX(0.9697);transform-origin:100% 50%;">250 ms</span></div>
<div class="t " style="left:251.0px;top:365.2px;font-size:24.72px;line-height:36px;color:#ccccdc;transform:translateX(-100%);"><span id="t11" style="transform:scaleX(0.9709);transform-origin:100% 50%;">200 ms</span></div>
<div class="t " style="left:251.0px;top:441.0px;font-size:24.72px;line-height:36px;color:#ccccdc;transform:translateX(-100%);"><span id="t12" style="transform:scaleX(0.9709);transform-origin:100% 50%;">150 ms</span></div>
<div class="t " style="left:251.0px;top:516.8px;font-size:24.72px;line-height:36px;color:#ccccdc;transform:translateX(-100%);"><span id="t13" style="transform:scaleX(0.9709);transform-origin:100% 50%;">100 ms</span></div>
<div class="t " style="left:251.0px;top:592.6px;font-size:24.72px;line-height:36px;color:#ccccdc;transform:translateX(-100%);"><span id="t14" style="transform:scaleX(0.9709);transform-origin:100% 50%;">50 ms</span></div>
<div class="t " style="left:251.0px;top:668.4px;font-size:24.72px;line-height:36px;color:#ccccdc;transform:translateX(-100%);"><span id="t15" style="transform:scaleX(0.9709);transform-origin:100% 50%;">0 s</span></div>
<div class="t " style="left:339.5px;top:699.5px;font-size:24.72px;line-height:36px;color:#ccccdc;transform:translateX(-50%);"><span id="t16" style="transform:scaleX(0.9560);transform-origin:50% 50%;">12:39:20</span></div>
<div class="t " style="left:455.5px;top:699.5px;font-size:24.72px;line-height:36px;color:#ccccdc;transform:translateX(-50%);"><span id="t17" style="transform:scaleX(0.9560);transform-origin:50% 50%;">12:39:30</span></div>
<div class="t " style="left:571.5px;top:699.5px;font-size:24.72px;line-height:36px;color:#ccccdc;transform:translateX(-50%);"><span id="t18" style="transform:scaleX(0.9560);transform-origin:50% 50%;">12:39:40</span></div>
<div class="t " style="left:687.5px;top:699.5px;font-size:24.72px;line-height:36px;color:#ccccdc;transform:translateX(-50%);"><span id="t19" style="transform:scaleX(0.9560);transform-origin:50% 50%;">12:39:50</span></div>
<div class="t " style="left:803.5px;top:699.5px;font-size:24.72px;line-height:36px;color:#ccccdc;transform:translateX(-50%);"><span id="t20" style="transform:scaleX(0.9560);transform-origin:50% 50%;">12:40:00</span></div>
<div class="t " style="left:919.5px;top:699.5px;font-size:24.72px;line-height:36px;color:#ccccdc;transform:translateX(-50%);"><span id="t21" style="transform:scaleX(0.9560);transform-origin:50% 50%;">12:40:10</span></div>
<div class="t " style="left:1035.5px;top:699.5px;font-size:24.72px;line-height:36px;color:#ccccdc;transform:translateX(-50%);"><span id="t22" style="transform:scaleX(0.9560);transform-origin:50% 50%;">12:40:20</span></div>
<div class="t " style="left:1151.5px;top:699.5px;font-size:24.72px;line-height:36px;color:#ccccdc;transform:translateX(-50%);"><span id="t23" style="transform:scaleX(0.9560);transform-origin:50% 50%;">12:40:30</span></div>
<div class="t " style="left:1267.5px;top:699.5px;font-size:24.72px;line-height:36px;color:#ccccdc;transform:translateX(-50%);"><span id="t24" style="transform:scaleX(0.9560);transform-origin:50% 50%;">12:40:40</span></div>
<div class="t " style="left:1383.5px;top:699.5px;font-size:24.72px;line-height:36px;color:#ccccdc;transform:translateX(-50%);"><span id="t25" style="transform:scaleX(0.9560);transform-origin:50% 50%;">12:40:50</span></div>
<div class="t " style="left:1499.5px;top:699.5px;font-size:24.72px;line-height:36px;color:#ccccdc;transform:translateX(-50%);"><span id="t26" style="transform:scaleX(0.9560);transform-origin:50% 50%;">12:41:00</span></div>
<div class="t " style="left:1615.5px;top:699.5px;font-size:24.72px;line-height:36px;color:#ccccdc;transform:translateX(-50%);"><span id="t27" style="transform:scaleX(0.9560);transform-origin:50% 50%;">12:41:10</span></div>
<div class="t " style="left:1731.5px;top:699.5px;font-size:24.72px;line-height:36px;color:#ccccdc;transform:translateX(-50%);"><span id="t28" style="transform:scaleX(0.9560);transform-origin:50% 50%;">12:41:20</span></div>
<div class="t " style="left:1847.5px;top:699.5px;font-size:24.72px;line-height:36px;color:#ccccdc;transform:translateX(-50%);"><span id="t29" style="transform:scaleX(0.9560);transform-origin:50% 50%;">12:41:30</span></div>
<div class="t " style="left:1963.5px;top:699.5px;font-size:24.72px;line-height:36px;color:#ccccdc;transform:translateX(-50%);"><span id="t30" style="transform:scaleX(0.9560);transform-origin:50% 50%;">12:41:40</span></div>
<div class="t " style="left:2079.5px;top:699.5px;font-size:24.72px;line-height:36px;color:#ccccdc;transform:translateX(-50%);"><span id="t31" style="transform:scaleX(0.9560);transform-origin:50% 50%;">12:41:50</span></div>
<div class="t " style="left:2195.5px;top:699.5px;font-size:24.72px;line-height:36px;color:#ccccdc;transform:translateX(-50%);"><span id="t32" style="transform:scaleX(0.9560);transform-origin:50% 50%;">12:42:00</span></div>
<div class="t " style="left:2311.5px;top:699.5px;font-size:24.72px;line-height:36px;color:#ccccdc;transform:translateX(-50%);"><span id="t33" style="transform:scaleX(0.9560);transform-origin:50% 50%;">12:42:10</span></div>
<div class="t " style="left:2427.5px;top:699.5px;font-size:24.72px;line-height:36px;color:#ccccdc;transform:translateX(-50%);"><span id="t34" style="transform:scaleX(0.9560);transform-origin:50% 50%;">12:42:20</span></div>
<div class="t " style="left:2543.5px;top:699.5px;font-size:24.72px;line-height:36px;color:#ccccdc;transform:translateX(-50%);"><span id="t35" style="transform:scaleX(0.9560);transform-origin:50% 50%;">12:42:30</span></div>
<div class="t " style="left:2659.5px;top:699.5px;font-size:24.72px;line-height:36px;color:#ccccdc;transform:translateX(-50%);"><span id="t36" style="transform:scaleX(0.9560);transform-origin:50% 50%;">12:42:40</span></div>
<div class="t " style="left:2775.5px;top:699.5px;font-size:24.72px;line-height:36px;color:#ccccdc;transform:translateX(-50%);"><span id="t37" style="transform:scaleX(0.9560);transform-origin:50% 50%;">12:42:50</span></div>
<div class="t " style="left:2891.5px;top:699.5px;font-size:24.72px;line-height:36px;color:#ccccdc;transform:translateX(-50%);"><span id="t38" style="transform:scaleX(0.9560);transform-origin:50% 50%;">12:43:00</span></div>
<div class="t " style="left:3007.5px;top:699.5px;font-size:24.72px;line-height:36px;color:#ccccdc;transform:translateX(-50%);"><span id="t39" style="transform:scaleX(0.9560);transform-origin:50% 50%;">12:43:10</span></div>
<div class="t " style="left:3123.5px;top:699.5px;font-size:24.72px;line-height:36px;color:#ccccdc;transform:translateX(-50%);"><span id="t40" style="transform:scaleX(0.9560);transform-origin:50% 50%;">12:43:20</span></div>
<div class="t " style="left:3239.5px;top:699.5px;font-size:24.72px;line-height:36px;color:#ccccdc;transform:translateX(-50%);"><span id="t41" style="transform:scaleX(0.9560);transform-origin:50% 50%;">12:43:30</span></div>
<div class="t " style="left:3355.5px;top:699.5px;font-size:24.72px;line-height:36px;color:#ccccdc;transform:translateX(-50%);"><span id="t42" style="transform:scaleX(0.9560);transform-origin:50% 50%;">12:43:40</span></div>
<div class="t " style="left:3471.5px;top:699.5px;font-size:24.72px;line-height:36px;color:#ccccdc;transform:translateX(-50%);"><span id="t43" style="transform:scaleX(0.9560);transform-origin:50% 50%;">12:43:50</span></div>
<div class="t " style="left:3587.5px;top:699.5px;font-size:24.72px;line-height:36px;color:#ccccdc;transform:translateX(-50%);"><span id="t44" style="transform:scaleX(0.9560);transform-origin:50% 50%;">12:44:00</span></div>
<div class="t " style="left:3703.5px;top:699.5px;font-size:24.72px;line-height:36px;color:#ccccdc;transform:translateX(-50%);"><span id="t45" style="transform:scaleX(0.9560);transform-origin:50% 50%;">12:44:10</span></div>
<div class="t " style="left:233.2px;top:746.5px;font-size:24.72px;line-height:36px;color:#ccccdc;"><span id="t46" style="letter-spacing:0.445px;margin-right:-0.445px;">https://prometheus.io/</span></div>
<div class="t " style="left:545.7px;top:746.5px;font-size:24.72px;line-height:36px;color:#ccccdc;"><span id="t47" style="letter-spacing:0.363px;margin-right:-0.363px;">https://wrong-website.com</span></div>
<div class="t " style="left:904.7px;top:746.5px;font-size:24.72px;line-height:36px;color:#ccccdc;"><span id="t48" style="letter-spacing:0.155px;margin-right:-0.155px;">prometheus.io</span></div>
<div class="t " style="left:1126.7px;top:746.5px;font-size:24.72px;line-height:36px;color:#ccccdc;"><span id="t49" style="letter-spacing:0.065px;margin-right:-0.065px;">wrong-website.com</span></div>
<div class="t m" style="left:184.0px;top:823.2px;font-size:30px;line-height:45px;color:#ccccdc;"><span id="t50" style="letter-spacing:1.045px;margin-right:-1.045px;transform:scaleX(1.0600);transform-origin:0 50%;">fdmlksdmlfk.com status</span></div>
<div class="t m" style="left:450.0px;top:905.0px;font-size:28px;line-height:42px;color:#ccccdc;transform:translateX(-50%);"><span id="t51" style="letter-spacing:0.422px;margin-right:-0.422px;">Status</span></div>
<div class="t m" style="left:450.0px;top:970.0px;font-size:28.6px;line-height:42px;color:#fff;transform:translateX(-50%);"><span id="t52" style="letter-spacing:0.778px;margin-right:-0.778px;">No data</span></div>
<div class="t m" style="left:450.0px;top:1057.0px;font-size:28px;line-height:42px;color:#ccccdc;transform:translateX(-50%);"><span id="t53" style="letter-spacing:0.133px;margin-right:-0.133px;">HTTP Status Code</span></div>
<div class="t m" style="left:450.0px;top:1122.0px;font-size:28.6px;line-height:42px;color:#ccccdc;transform:translateX(-50%);"><span id="t54" style="letter-spacing:0.778px;margin-right:-0.778px;">No data</span></div>
<div class="t m" style="left:450.0px;top:1209.0px;font-size:28px;line-height:42px;color:#ccccdc;transform:translateX(-50%);"><span id="t55" style="letter-spacing:0.428px;margin-right:-0.428px;">HTTP Version</span></div>
<div class="t m" style="left:450.0px;top:1274.0px;font-size:28.6px;line-height:42px;color:#ccccdc;transform:translateX(-50%);"><span id="t56" style="letter-spacing:0.778px;margin-right:-0.778px;">No data</span></div>
<div class="t m" style="left:450.0px;top:1361.0px;font-size:28px;line-height:42px;color:#ccccdc;transform:translateX(-50%);"><span id="t57" style="transform:scaleX(0.9349);transform-origin:50% 50%;">SSL</span></div>
<div class="t m" style="left:450.0px;top:1426.0px;font-size:28.6px;line-height:42px;color:#d44a3a;transform:translateX(-50%);"><span id="t58" style="letter-spacing:0.778px;margin-right:-0.778px;">No data</span></div>
<div class="t m" style="left:1521.0px;top:1361.0px;font-size:28px;line-height:42px;color:#ccccdc;transform:translateX(-50%);"><span id="t59" style="letter-spacing:-0.447px;margin-right:0.447px;">SSL Expiry</span></div>
<div class="t m" style="left:1521.0px;top:1426.0px;font-size:28.6px;line-height:42px;color:#d44a3a;transform:translateX(-50%);"><span id="t60" style="letter-spacing:0.778px;margin-right:-0.778px;">No data</span></div>
<div class="t m" style="left:2669.0px;top:1361.0px;font-size:28px;line-height:42px;color:#ccccdc;transform:translateX(-50%);"><span id="t61" style="letter-spacing:0.032px;margin-right:-0.032px;">Average Probe Duration</span></div>
<div class="t m" style="left:2669.0px;top:1426.0px;font-size:28.6px;line-height:42px;color:#ccccdc;transform:translateX(-50%);"><span id="t62" style="letter-spacing:0.778px;margin-right:-0.778px;">No data</span></div>
<div class="t m" style="left:3435.0px;top:1361.0px;font-size:28px;line-height:42px;color:#ccccdc;transform:translateX(-50%);"><span id="t63" style="letter-spacing:-0.099px;margin-right:0.099px;">Average DNS Lookup</span></div>
<div class="t m" style="left:3435.0px;top:1426.0px;font-size:28.6px;line-height:42px;color:#ccccdc;transform:translateX(-50%);"><span id="t64" style="letter-spacing:0.778px;margin-right:-0.778px;">No data</span></div>
<div class="t m" style="left:1521.0px;top:905.0px;font-size:28px;line-height:42px;color:#ccccdc;transform:translateX(-50%);"><span id="t65" style="letter-spacing:0.208px;margin-right:-0.208px;">HTTP Duration</span></div>
<div class="t " style="left:869.0px;top:974.2px;font-size:24.72px;line-height:36px;color:#ccccdc;transform:translateX(-100%);"><span id="t66" style="transform:scaleX(0.9709);transform-origin:100% 50%;">1 s</span></div>
<div class="t " style="left:869.0px;top:1040.2px;font-size:24.72px;line-height:36px;color:#ccccdc;transform:translateX(-100%);"><span id="t67" style="transform:scaleX(0.9709);transform-origin:100% 50%;">500 ms</span></div>
<div class="t " style="left:869.0px;top:1106.2px;font-size:24.72px;line-height:36px;color:#ccccdc;transform:translateX(-100%);"><span id="t68" style="transform:scaleX(0.9709);transform-origin:100% 50%;">0 s</span></div>
<div class="t " style="left:869.0px;top:1172.2px;font-size:24.72px;line-height:36px;color:#ccccdc;transform:translateX(-100%);"><span id="t69" style="transform:scaleX(0.9709);transform-origin:100% 50%;">-500 ms</span></div>
<div class="t " style="left:869.0px;top:1238.2px;font-size:24.72px;line-height:36px;color:#ccccdc;transform:translateX(-100%);"><span id="t70" style="transform:scaleX(0.9709);transform-origin:100% 50%;">-1 s</span></div>
<div class="t " style="left:957.5px;top:1267.5px;font-size:24.72px;line-height:36px;color:#ccccdc;transform:translateX(-50%);"><span id="t71" style="transform:scaleX(0.9560);transform-origin:50% 50%;">12:39:30</span></div>
<div class="t " style="left:1090.4px;top:1267.5px;font-size:24.72px;line-height:36px;color:#ccccdc;transform:translateX(-50%);"><span id="t72" style="transform:scaleX(0.9560);transform-origin:50% 50%;">12:40:00</span></div>
<div class="t " style="left:1223.3px;top:1267.5px;font-size:24.72px;line-height:36px;color:#ccccdc;transform:translateX(-50%);"><span id="t73" style="transform:scaleX(0.9560);transform-origin:50% 50%;">12:40:30</span></div>
<div class="t " style="left:1356.2px;top:1267.5px;font-size:24.72px;line-height:36px;color:#ccccdc;transform:translateX(-50%);"><span id="t74" style="transform:scaleX(0.9560);transform-origin:50% 50%;">12:41:00</span></div>
<div class="t " style="left:1489.1px;top:1267.5px;font-size:24.72px;line-height:36px;color:#ccccdc;transform:translateX(-50%);"><span id="t75" style="transform:scaleX(0.9560);transform-origin:50% 50%;">12:41:30</span></div>
<div class="t " style="left:1622.0px;top:1267.5px;font-size:24.72px;line-height:36px;color:#ccccdc;transform:translateX(-50%);"><span id="t76" style="transform:scaleX(0.9560);transform-origin:50% 50%;">12:42:00</span></div>
<div class="t " style="left:1754.9px;top:1267.5px;font-size:24.72px;line-height:36px;color:#ccccdc;transform:translateX(-50%);"><span id="t77" style="transform:scaleX(0.9560);transform-origin:50% 50%;">12:42:30</span></div>
<div class="t " style="left:1887.8px;top:1267.5px;font-size:24.72px;line-height:36px;color:#ccccdc;transform:translateX(-50%);"><span id="t78" style="transform:scaleX(0.9560);transform-origin:50% 50%;">12:43:00</span></div>
<div class="t " style="left:2020.7px;top:1267.5px;font-size:24.72px;line-height:36px;color:#ccccdc;transform:translateX(-50%);"><span id="t79" style="transform:scaleX(0.9560);transform-origin:50% 50%;">12:43:30</span></div>
<div class="t " style="left:2153.6px;top:1267.5px;font-size:24.72px;line-height:36px;color:#ccccdc;transform:translateX(-50%);"><span id="t80" style="transform:scaleX(0.9560);transform-origin:50% 50%;">12:44:00</span></div>
<div class="t " style="left:1521.0px;top:1057.6px;font-size:28.84px;line-height:42px;color:#ccccdc;transform:translateX(-50%);"><span id="t81" style="transform:scaleX(0.9803);transform-origin:50% 50%;">No data</span></div>
<div class="t m" style="left:3051.0px;top:905.0px;font-size:28px;line-height:42px;color:#ccccdc;transform:translateX(-50%);"><span id="t82" style="letter-spacing:0.164px;margin-right:-0.164px;">Probe Duration</span></div>
<div class="t " style="left:2399.0px;top:974.2px;font-size:24.72px;line-height:36px;color:#ccccdc;transform:translateX(-100%);"><span id="t83" style="transform:scaleX(0.9709);transform-origin:100% 50%;">1 s</span></div>
<div class="t " style="left:2399.0px;top:1040.2px;font-size:24.72px;line-height:36px;color:#ccccdc;transform:translateX(-100%);"><span id="t84" style="transform:scaleX(0.9709);transform-origin:100% 50%;">500 ms</span></div>
<div class="t " style="left:2399.0px;top:1106.2px;font-size:24.72px;line-height:36px;color:#ccccdc;transform:translateX(-100%);"><span id="t85" style="transform:scaleX(0.9709);transform-origin:100% 50%;">0 s</span></div>
<div class="t " style="left:2399.0px;top:1172.2px;font-size:24.72px;line-height:36px;color:#ccccdc;transform:translateX(-100%);"><span id="t86" style="transform:scaleX(0.9709);transform-origin:100% 50%;">-500 ms</span></div>
<div class="t " style="left:2399.0px;top:1238.2px;font-size:24.72px;line-height:36px;color:#ccccdc;transform:translateX(-100%);"><span id="t87" style="transform:scaleX(0.9709);transform-origin:100% 50%;">-1 s</span></div>
<div class="t " style="left:2487.5px;top:1267.5px;font-size:24.72px;line-height:36px;color:#ccccdc;transform:translateX(-50%);"><span id="t88" style="transform:scaleX(0.9560);transform-origin:50% 50%;">12:39:30</span></div>
<div class="t " style="left:2620.4px;top:1267.5px;font-size:24.72px;line-height:36px;color:#ccccdc;transform:translateX(-50%);"><span id="t89" style="transform:scaleX(0.9560);transform-origin:50% 50%;">12:40:00</span></div>
<div class="t " style="left:2753.3px;top:1267.5px;font-size:24.72px;line-height:36px;color:#ccccdc;transform:translateX(-50%);"><span id="t90" style="transform:scaleX(0.9560);transform-origin:50% 50%;">12:40:30</span></div>
<div class="t " style="left:2886.2px;top:1267.5px;font-size:24.72px;line-height:36px;color:#ccccdc;transform:translateX(-50%);"><span id="t91" style="transform:scaleX(0.9560);transform-origin:50% 50%;">12:41:00</span></div>
<div class="t " style="left:3019.1px;top:1267.5px;font-size:24.72px;line-height:36px;color:#ccccdc;transform:translateX(-50%);"><span id="t92" style="transform:scaleX(0.9560);transform-origin:50% 50%;">12:41:30</span></div>
<div class="t " style="left:3152.0px;top:1267.5px;font-size:24.72px;line-height:36px;color:#ccccdc;transform:translateX(-50%);"><span id="t93" style="transform:scaleX(0.9560);transform-origin:50% 50%;">12:42:00</span></div>
<div class="t " style="left:3284.9px;top:1267.5px;font-size:24.72px;line-height:36px;color:#ccccdc;transform:translateX(-50%);"><span id="t94" style="transform:scaleX(0.9560);transform-origin:50% 50%;">12:42:30</span></div>
<div class="t " style="left:3417.8px;top:1267.5px;font-size:24.72px;line-height:36px;color:#ccccdc;transform:translateX(-50%);"><span id="t95" style="transform:scaleX(0.9560);transform-origin:50% 50%;">12:43:00</span></div>
<div class="t " style="left:3550.7px;top:1267.5px;font-size:24.72px;line-height:36px;color:#ccccdc;transform:translateX(-50%);"><span id="t96" style="transform:scaleX(0.9560);transform-origin:50% 50%;">12:43:30</span></div>
<div class="t " style="left:3683.6px;top:1267.5px;font-size:24.72px;line-height:36px;color:#ccccdc;transform:translateX(-50%);"><span id="t97" style="transform:scaleX(0.9560);transform-origin:50% 50%;">12:44:00</span></div>
<div class="t " style="left:3051.0px;top:1057.6px;font-size:28.84px;line-height:42px;color:#ccccdc;transform:translateX(-50%);"><span id="t98" style="transform:scaleX(0.9803);transform-origin:50% 50%;">No data</span></div>
<div class="t m" style="left:184.0px;top:1507.2px;font-size:30px;line-height:45px;color:#ccccdc;"><span id="t99" style="letter-spacing:1.029px;margin-right:-1.029px;transform:scaleX(1.0600);transform-origin:0 50%;">https://prometheus.io/ status</span></div>
<div class="t m" style="left:450.0px;top:1589.0px;font-size:28px;line-height:42px;color:#ccccdc;transform:translateX(-50%);"><span id="t100" style="letter-spacing:0.422px;margin-right:-0.422px;">Status</span></div>
<div class="t m" style="left:450.0px;top:1654.0px;font-size:28.6px;line-height:42px;color:#fff;transform:translateX(-50%);"><span id="t101" style="">1</span></div>
<div class="t m" style="left:450.0px;top:1741.0px;font-size:28px;line-height:42px;color:#ccccdc;transform:translateX(-50%);"><span id="t102" style="letter-spacing:0.133px;margin-right:-0.133px;">HTTP Status Code</span></div>
<div class="t m" style="left:450.0px;top:1806.0px;font-size:28.6px;line-height:42px;color:#ccccdc;transform:translateX(-50%);"><span id="t103" style="letter-spacing:1.760px;margin-right:-1.760px;">200</span></div>
<div class="t m" style="left:450.0px;top:1893.0px;font-size:28px;line-height:42px;color:#ccccdc;transform:translateX(-50%);"><span id="t104" style="letter-spacing:0.428px;margin-right:-0.428px;">HTTP Version</span></div>
<div class="t m" style="left:450.0px;top:1958.0px;font-size:28.6px;line-height:42px;color:#ccccdc;transform:translateX(-50%);"><span id="t105" style="">2</span></div>
<div class="t m" style="left:450.0px;top:2045.0px;font-size:28px;line-height:42px;color:#ccccdc;transform:translateX(-50%);"><span id="t106" style="transform:scaleX(0.9349);transform-origin:50% 50%;">SSL</span></div>
<div class="t m" style="left:450.0px;top:2110.0px;font-size:28.6px;line-height:42px;color:#299c46;transform:translateX(-50%);"><span id="t107" style="">1</span></div>
<div class="t m" style="left:1521.0px;top:2045.0px;font-size:28px;line-height:42px;color:#ccccdc;transform:translateX(-50%);"><span id="t108" style="letter-spacing:-0.447px;margin-right:0.447px;">SSL Expiry</span></div>
<div class="t m" style="left:1521.0px;top:2110.0px;font-size:28.6px;line-height:42px;color:#299c46;transform:translateX(-50%);"><span id="t109" style="letter-spacing:0.907px;margin-right:-0.907px;">11 months, 2 weeks, 1 day</span></div>
<div class="t m" style="left:2669.0px;top:2045.0px;font-size:28px;line-height:42px;color:#ccccdc;transform:translateX(-50%);"><span id="t110" style="letter-spacing:0.032px;margin-right:-0.032px;">Average Probe Duration</span></div>
<div class="t m" style="left:2669.0px;top:2110.0px;font-size:28.6px;line-height:42px;color:#ccccdc;transform:translateX(-50%);"><span id="t111" style="letter-spacing:0.203px;margin-right:-0.203px;">131 ms</span></div>
<div class="t m" style="left:3435.0px;top:2045.0px;font-size:28px;line-height:42px;color:#ccccdc;transform:translateX(-50%);"><span id="t112" style="letter-spacing:-0.099px;margin-right:0.099px;">Average DNS Lookup</span></div>
<div class="t m" style="left:3435.0px;top:2110.0px;font-size:28.6px;line-height:42px;color:#ccccdc;transform:translateX(-50%);"><span id="t113" style="letter-spacing:0.564px;margin-right:-0.564px;">3.29 ms</span></div>
<div class="t m" style="left:1521.0px;top:1589.0px;font-size:28px;line-height:42px;color:#ccccdc;transform:translateX(-50%);"><span id="t114" style="letter-spacing:0.208px;margin-right:-0.208px;">HTTP Duration</span></div>
<div class="t " style="left:862.0px;top:1658.3px;font-size:24.72px;line-height:36px;color:#ccccdc;transform:translateX(-100%);"><span id="t115" style="transform:scaleX(0.9697);transform-origin:100% 50%;">250 ms</span></div>
<div class="t " style="left:862.0px;top:1703.8px;font-size:24.72px;line-height:36px;color:#ccccdc;transform:translateX(-100%);"><span id="t116" style="transform:scaleX(0.9709);transform-origin:100% 50%;">200 ms</span></div>
<div class="t " style="left:862.0px;top:1749.3px;font-size:24.72px;line-height:36px;color:#ccccdc;transform:translateX(-100%);"><span id="t117" style="transform:scaleX(0.9709);transform-origin:100% 50%;">150 ms</span></div>
<div class="t " style="left:862.0px;top:1794.8px;font-size:24.72px;line-height:36px;color:#ccccdc;transform:translateX(-100%);"><span id="t118" style="transform:scaleX(0.9709);transform-origin:100% 50%;">100 ms</span></div>
<div class="t " style="left:862.0px;top:1840.3px;font-size:24.72px;line-height:36px;color:#ccccdc;transform:translateX(-100%);"><span id="t119" style="transform:scaleX(0.9709);transform-origin:100% 50%;">50 ms</span></div>
<div class="t " style="left:862.0px;top:1885.8px;font-size:24.72px;line-height:36px;color:#ccccdc;transform:translateX(-100%);"><span id="t120" style="transform:scaleX(0.9709);transform-origin:100% 50%;">0 s</span></div>
<div class="t " style="left:949.5px;top:1916.0px;font-size:24.72px;line-height:36px;color:#ccccdc;transform:translateX(-50%);"><span id="t121" style="transform:scaleX(0.9560);transform-origin:50% 50%;">12:39:30</span></div>
<div class="t " style="left:1083.2px;top:1916.0px;font-size:24.72px;line-height:36px;color:#ccccdc;transform:translateX(-50%);"><span id="t122" style="transform:scaleX(0.9560);transform-origin:50% 50%;">12:40:00</span></div>
<div class="t " style="left:1216.9px;top:1916.0px;font-size:24.72px;line-height:36px;color:#ccccdc;transform:translateX(-50%);"><span id="t123" style="transform:scaleX(0.9560);transform-origin:50% 50%;">12:40:30</span></div>
<div class="t " style="left:1350.6px;top:1916.0px;font-size:24.72px;line-height:36px;color:#ccccdc;transform:translateX(-50%);"><span id="t124" style="transform:scaleX(0.9560);transform-origin:50% 50%;">12:41:00</span></div>
<div class="t " style="left:1484.3px;top:1916.0px;font-size:24.72px;line-height:36px;color:#ccccdc;transform:translateX(-50%);"><span id="t125" style="transform:scaleX(0.9560);transform-origin:50% 50%;">12:41:30</span></div>
<div class="t " style="left:1618.0px;top:1916.0px;font-size:24.72px;line-height:36px;color:#ccccdc;transform:translateX(-50%);"><span id="t126" style="transform:scaleX(0.9560);transform-origin:50% 50%;">12:42:00</span></div>
<div class="t " style="left:1751.7px;top:1916.0px;font-size:24.72px;line-height:36px;color:#ccccdc;transform:translateX(-50%);"><span id="t127" style="transform:scaleX(0.9560);transform-origin:50% 50%;">12:42:30</span></div>
<div class="t " style="left:1885.4px;top:1916.0px;font-size:24.72px;line-height:36px;color:#ccccdc;transform:translateX(-50%);"><span id="t128" style="transform:scaleX(0.9560);transform-origin:50% 50%;">12:43:00</span></div>
<div class="t " style="left:2019.1px;top:1916.0px;font-size:24.72px;line-height:36px;color:#ccccdc;transform:translateX(-50%);"><span id="t129" style="transform:scaleX(0.9560);transform-origin:50% 50%;">12:43:30</span></div>
<div class="t " style="left:2152.8px;top:1916.0px;font-size:24.72px;line-height:36px;color:#ccccdc;transform:translateX(-50%);"><span id="t130" style="transform:scaleX(0.9560);transform-origin:50% 50%;">12:44:00</span></div>
<div class="t " style="left:846.7px;top:1963.0px;font-size:24.72px;line-height:36px;color:#ccccdc;"><span id="t131" style="letter-spacing:-0.028px;margin-right:0.028px;">connect</span></div>
<div class="t " style="left:997.7px;top:1963.0px;font-size:24.72px;line-height:36px;color:#ccccdc;"><span id="t132" style="letter-spacing:0.112px;margin-right:-0.112px;">processing</span></div>
<div class="t " style="left:1181.7px;top:1963.0px;font-size:24.72px;line-height:36px;color:#ccccdc;"><span id="t133" style="letter-spacing:-0.055px;margin-right:0.055px;">resolve</span></div>
<div class="t " style="left:1325.7px;top:1963.0px;font-size:24.72px;line-height:36px;color:#ccccdc;"><span id="t134" style="letter-spacing:0.244px;margin-right:-0.244px;">tls</span></div>
<div class="t " style="left:1416.7px;top:1963.0px;font-size:24.72px;line-height:36px;color:#ccccdc;"><span id="t135" style="letter-spacing:-0.216px;margin-right:0.216px;">transfer</span></div>
<div class="t m" style="left:3051.0px;top:1589.0px;font-size:28px;line-height:42px;color:#ccccdc;transform:translateX(-50%);"><span id="t136" style="letter-spacing:0.164px;margin-right:-0.164px;">Probe Duration</span></div>
<div class="t " style="left:2392.0px;top:1658.3px;font-size:24.72px;line-height:36px;color:#ccccdc;transform:translateX(-100%);"><span id="t137" style="transform:scaleX(0.9697);transform-origin:100% 50%;">250 ms</span></div>
<div class="t " style="left:2392.0px;top:1703.8px;font-size:24.72px;line-height:36px;color:#ccccdc;transform:translateX(-100%);"><span id="t138" style="transform:scaleX(0.9709);transform-origin:100% 50%;">200 ms</span></div>
<div class="t " style="left:2392.0px;top:1749.3px;font-size:24.72px;line-height:36px;color:#ccccdc;transform:translateX(-100%);"><span id="t139" style="transform:scaleX(0.9709);transform-origin:100% 50%;">150 ms</span></div>
<div class="t " style="left:2392.0px;top:1794.8px;font-size:24.72px;line-height:36px;color:#ccccdc;transform:translateX(-100%);"><span id="t140" style="transform:scaleX(0.9709);transform-origin:100% 50%;">100 ms</span></div>
<div class="t " style="left:2392.0px;top:1840.3px;font-size:24.72px;line-height:36px;color:#ccccdc;transform:translateX(-100%);"><span id="t141" style="transform:scaleX(0.9709);transform-origin:100% 50%;">50 ms</span></div>
<div class="t " style="left:2392.0px;top:1885.8px;font-size:24.72px;line-height:36px;color:#ccccdc;transform:translateX(-100%);"><span id="t142" style="transform:scaleX(0.9709);transform-origin:100% 50%;">0 s</span></div>
<div class="t " style="left:2479.5px;top:1916.0px;font-size:24.72px;line-height:36px;color:#ccccdc;transform:translateX(-50%);"><span id="t143" style="transform:scaleX(0.9560);transform-origin:50% 50%;">12:39:30</span></div>
<div class="t " style="left:2613.2px;top:1916.0px;font-size:24.72px;line-height:36px;color:#ccccdc;transform:translateX(-50%);"><span id="t144" style="transform:scaleX(0.9560);transform-origin:50% 50%;">12:40:00</span></div>
<div class="t " style="left:2746.9px;top:1916.0px;font-size:24.72px;line-height:36px;color:#ccccdc;transform:translateX(-50%);"><span id="t145" style="transform:scaleX(0.9560);transform-origin:50% 50%;">12:40:30</span></div>
<div class="t " style="left:2880.6px;top:1916.0px;font-size:24.72px;line-height:36px;color:#ccccdc;transform:translateX(-50%);"><span id="t146" style="transform:scaleX(0.9560);transform-origin:50% 50%;">12:41:00</span></div>
<div class="t " style="left:3014.3px;top:1916.0px;font-size:24.72px;line-height:36px;color:#ccccdc;transform:translateX(-50%);"><span id="t147" style="transform:scaleX(0.9560);transform-origin:50% 50%;">12:41:30</span></div>
<div class="t " style="left:3148.0px;top:1916.0px;font-size:24.72px;line-height:36px;color:#ccccdc;transform:translateX(-50%);"><span id="t148" style="transform:scaleX(0.9560);transform-origin:50% 50%;">12:42:00</span></div>
<div class="t " style="left:3281.7px;top:1916.0px;font-size:24.72px;line-height:36px;color:#ccccdc;transform:translateX(-50%);"><span id="t149" style="transform:scaleX(0.9560);transform-origin:50% 50%;">12:42:30</span></div>
<div class="t " style="left:3415.4px;top:1916.0px;font-size:24.72px;line-height:36px;color:#ccccdc;transform:translateX(-50%);"><span id="t150" style="transform:scaleX(0.9560);transform-origin:50% 50%;">12:43:00</span></div>
<div class="t " style="left:3549.1px;top:1916.0px;font-size:24.72px;line-height:36px;color:#ccccdc;transform:translateX(-50%);"><span id="t151" style="transform:scaleX(0.9560);transform-origin:50% 50%;">12:43:30</span></div>
<div class="t " style="left:3682.8px;top:1916.0px;font-size:24.72px;line-height:36px;color:#ccccdc;transform:translateX(-50%);"><span id="t152" style="transform:scaleX(0.9560);transform-origin:50% 50%;">12:44:00</span></div>
<div class="t " style="left:2376.7px;top:1963.0px;font-size:24.72px;line-height:36px;color:#ccccdc;"><span id="t153" style="letter-spacing:-0.058px;margin-right:0.058px;">seconds</span></div>
</div>
</body></html>
